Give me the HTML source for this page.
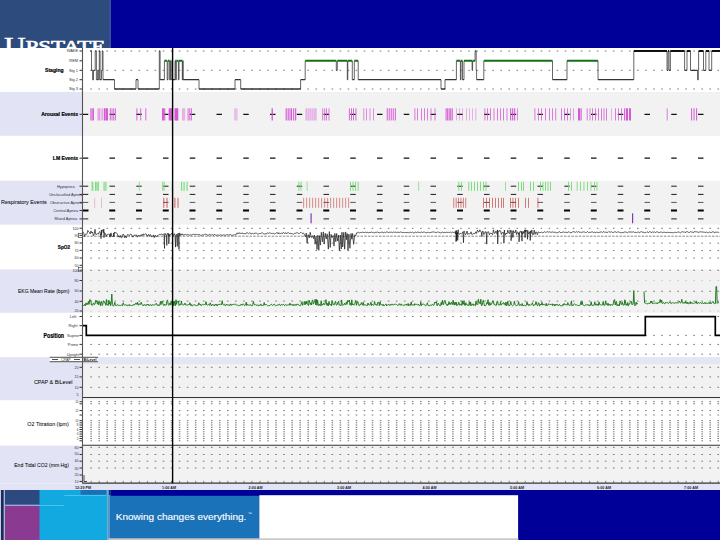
<!DOCTYPE html>
<html><head><meta charset="utf-8"><style>html,body{margin:0;padding:0;width:720px;height:540px;overflow:hidden;background:#fff}</style></head>
<body><div style="position:relative;width:720px;height:540px;overflow:hidden"><svg width="720" height="540" viewBox="0 0 720 540" style="position:absolute;left:0;top:0;display:block"><rect x="0.00" y="48.00" width="720.00" height="442.00" fill="#ffffff"/>
<rect x="0.00" y="91.90" width="82.50" height="43.90" fill="#e2e4f6"/>
<rect x="82.50" y="91.90" width="637.50" height="43.90" fill="#f2f2f2"/>
<rect x="0.00" y="180.70" width="82.50" height="44.00" fill="#e2e4f6"/>
<rect x="82.50" y="180.70" width="637.50" height="44.00" fill="#f2f2f2"/>
<rect x="0.00" y="269.40" width="82.50" height="43.40" fill="#e2e4f6"/>
<rect x="82.50" y="269.40" width="637.50" height="43.40" fill="#f2f2f2"/>
<rect x="0.00" y="357.10" width="82.50" height="43.10" fill="#e2e4f6"/>
<rect x="82.50" y="357.10" width="637.50" height="43.10" fill="#f2f2f2"/>
<rect x="0.00" y="445.60" width="82.50" height="37.80" fill="#e2e4f6"/>
<rect x="82.50" y="445.60" width="637.50" height="37.80" fill="#f2f2f2"/>
<rect x="0.00" y="483.40" width="720.00" height="6.60" fill="#e2e4f6"/>
<rect x="82.50" y="357.10" width="637.50" height="7.00" fill="#e4e6f6"/>
<path d="M90.34 51.00h1.6M98.38 51.00h1.6M106.42 51.00h1.6M114.46 51.00h1.6M122.50 51.00h1.6M130.54 51.00h1.6M138.58 51.00h1.6M146.62 51.00h1.6M154.66 51.00h1.6M162.70 51.00h1.6M170.74 51.00h1.6M178.78 51.00h1.6M186.82 51.00h1.6M194.86 51.00h1.6M202.90 51.00h1.6M210.94 51.00h1.6M218.98 51.00h1.6M227.02 51.00h1.6M235.06 51.00h1.6M243.10 51.00h1.6M251.14 51.00h1.6M259.18 51.00h1.6M267.22 51.00h1.6M275.26 51.00h1.6M283.30 51.00h1.6M291.34 51.00h1.6M299.38 51.00h1.6M307.42 51.00h1.6M315.46 51.00h1.6M323.50 51.00h1.6M331.54 51.00h1.6M339.58 51.00h1.6M347.62 51.00h1.6M355.66 51.00h1.6M363.70 51.00h1.6M371.74 51.00h1.6M379.78 51.00h1.6M387.82 51.00h1.6M395.86 51.00h1.6M403.90 51.00h1.6M411.94 51.00h1.6M419.98 51.00h1.6M428.02 51.00h1.6M436.06 51.00h1.6M444.10 51.00h1.6M452.14 51.00h1.6M460.18 51.00h1.6M468.22 51.00h1.6M476.26 51.00h1.6M484.30 51.00h1.6M492.34 51.00h1.6M500.38 51.00h1.6M508.42 51.00h1.6M516.46 51.00h1.6M524.50 51.00h1.6M532.54 51.00h1.6M540.58 51.00h1.6M548.62 51.00h1.6M556.66 51.00h1.6M564.70 51.00h1.6M572.74 51.00h1.6M580.78 51.00h1.6M588.82 51.00h1.6M596.86 51.00h1.6M604.90 51.00h1.6M612.94 51.00h1.6M620.98 51.00h1.6M629.02 51.00h1.6M637.06 51.00h1.6M645.10 51.00h1.6M653.14 51.00h1.6M661.18 51.00h1.6M669.22 51.00h1.6M677.26 51.00h1.6M685.30 51.00h1.6M693.34 51.00h1.6M701.38 51.00h1.6M709.42 51.00h1.6M717.46 51.00h1.6" stroke="#777" stroke-width="1.0" fill="none"/>
<path d="M90.34 70.30h1.6M98.38 70.30h1.6M106.42 70.30h1.6M114.46 70.30h1.6M122.50 70.30h1.6M130.54 70.30h1.6M138.58 70.30h1.6M146.62 70.30h1.6M154.66 70.30h1.6M162.70 70.30h1.6M170.74 70.30h1.6M178.78 70.30h1.6M186.82 70.30h1.6M194.86 70.30h1.6M202.90 70.30h1.6M210.94 70.30h1.6M218.98 70.30h1.6M227.02 70.30h1.6M235.06 70.30h1.6M243.10 70.30h1.6M251.14 70.30h1.6M259.18 70.30h1.6M267.22 70.30h1.6M275.26 70.30h1.6M283.30 70.30h1.6M291.34 70.30h1.6M299.38 70.30h1.6M307.42 70.30h1.6M315.46 70.30h1.6M323.50 70.30h1.6M331.54 70.30h1.6M339.58 70.30h1.6M347.62 70.30h1.6M355.66 70.30h1.6M363.70 70.30h1.6M371.74 70.30h1.6M379.78 70.30h1.6M387.82 70.30h1.6M395.86 70.30h1.6M403.90 70.30h1.6M411.94 70.30h1.6M419.98 70.30h1.6M428.02 70.30h1.6M436.06 70.30h1.6M444.10 70.30h1.6M452.14 70.30h1.6M460.18 70.30h1.6M468.22 70.30h1.6M476.26 70.30h1.6M484.30 70.30h1.6M492.34 70.30h1.6M500.38 70.30h1.6M508.42 70.30h1.6M516.46 70.30h1.6M524.50 70.30h1.6M532.54 70.30h1.6M540.58 70.30h1.6M548.62 70.30h1.6M556.66 70.30h1.6M564.70 70.30h1.6M572.74 70.30h1.6M580.78 70.30h1.6M588.82 70.30h1.6M596.86 70.30h1.6M604.90 70.30h1.6M612.94 70.30h1.6M620.98 70.30h1.6M629.02 70.30h1.6M637.06 70.30h1.6M645.10 70.30h1.6M653.14 70.30h1.6M661.18 70.30h1.6M669.22 70.30h1.6M677.26 70.30h1.6M685.30 70.30h1.6M693.34 70.30h1.6M701.38 70.30h1.6M709.42 70.30h1.6M717.46 70.30h1.6" stroke="#777" stroke-width="1.0" fill="none"/>
<path d="M90.34 89.00h1.6M98.38 89.00h1.6M106.42 89.00h1.6M114.46 89.00h1.6M122.50 89.00h1.6M130.54 89.00h1.6M138.58 89.00h1.6M146.62 89.00h1.6M154.66 89.00h1.6M162.70 89.00h1.6M170.74 89.00h1.6M178.78 89.00h1.6M186.82 89.00h1.6M194.86 89.00h1.6M202.90 89.00h1.6M210.94 89.00h1.6M218.98 89.00h1.6M227.02 89.00h1.6M235.06 89.00h1.6M243.10 89.00h1.6M251.14 89.00h1.6M259.18 89.00h1.6M267.22 89.00h1.6M275.26 89.00h1.6M283.30 89.00h1.6M291.34 89.00h1.6M299.38 89.00h1.6M307.42 89.00h1.6M315.46 89.00h1.6M323.50 89.00h1.6M331.54 89.00h1.6M339.58 89.00h1.6M347.62 89.00h1.6M355.66 89.00h1.6M363.70 89.00h1.6M371.74 89.00h1.6M379.78 89.00h1.6M387.82 89.00h1.6M395.86 89.00h1.6M403.90 89.00h1.6M411.94 89.00h1.6M419.98 89.00h1.6M428.02 89.00h1.6M436.06 89.00h1.6M444.10 89.00h1.6M452.14 89.00h1.6M460.18 89.00h1.6M468.22 89.00h1.6M476.26 89.00h1.6M484.30 89.00h1.6M492.34 89.00h1.6M500.38 89.00h1.6M508.42 89.00h1.6M516.46 89.00h1.6M524.50 89.00h1.6M532.54 89.00h1.6M540.58 89.00h1.6M548.62 89.00h1.6M556.66 89.00h1.6M564.70 89.00h1.6M572.74 89.00h1.6M580.78 89.00h1.6M588.82 89.00h1.6M596.86 89.00h1.6M604.90 89.00h1.6M612.94 89.00h1.6M620.98 89.00h1.6M629.02 89.00h1.6M637.06 89.00h1.6M645.10 89.00h1.6M653.14 89.00h1.6M661.18 89.00h1.6M669.22 89.00h1.6M677.26 89.00h1.6M685.30 89.00h1.6M693.34 89.00h1.6M701.38 89.00h1.6M709.42 89.00h1.6M717.46 89.00h1.6" stroke="#777" stroke-width="1.0" fill="none"/>
<line x1="79.50" y1="51.00" x2="82.50" y2="51.00" stroke="#333" stroke-width="1"/>
<line x1="79.50" y1="60.80" x2="82.50" y2="60.80" stroke="#333" stroke-width="1"/>
<line x1="79.50" y1="70.30" x2="82.50" y2="70.30" stroke="#333" stroke-width="1"/>
<line x1="79.50" y1="79.70" x2="82.50" y2="79.70" stroke="#333" stroke-width="1"/>
<line x1="79.50" y1="89.00" x2="82.50" y2="89.00" stroke="#333" stroke-width="1"/>
<path d="M91.50 51.00V70.30M92.60 70.30V79.70M93.50 79.70V70.30M95.20 70.30V51.00M96.40 51.00V79.70M97.70 79.70V70.30M98.30 70.30V79.70M99.30 79.70V51.00M100.10 51.00V79.70M101.50 79.70V70.30M102.30 70.30V51.00M103.00 51.00V79.70M114.50 79.70V89.00M136.00 89.00V79.70M138.00 79.70V89.00M159.30 89.00V51.00M160.10 51.00V79.70M164.40 79.70V60.80M167.20 60.80V79.70M168.00 79.70V60.80M169.60 60.80V79.70M170.50 79.70V60.80M171.30 60.80V79.70M175.00 79.70V60.80M175.70 60.80V79.70M176.30 79.70V60.80M178.40 60.80V79.70M179.00 79.70V60.80M182.30 60.80V79.70M182.80 79.70V60.80M183.10 60.80V79.70M199.00 79.70V89.00M235.00 89.00V79.70M240.70 79.70V89.00M300.60 89.00V79.70M305.20 79.70V60.80M336.30 60.80V70.30M337.30 70.30V60.80M347.30 60.80V79.70M347.80 79.70V60.80M352.30 60.80V79.70M354.30 79.70V60.80M358.20 60.80V79.70M441.00 79.70V89.00M445.00 89.00V79.70M456.40 79.70V60.80M460.40 60.80V79.70M461.00 79.70V60.80M462.50 60.80V79.70M464.00 79.70V60.80M472.10 60.80V70.30M472.60 70.30V60.80M475.10 60.80V51.00M476.20 51.00V70.30M476.60 70.30V79.70M483.80 79.70V60.80M552.50 60.80V79.70M567.00 79.70V60.80M598.00 60.80V79.70M633.80 79.70V51.00M667.00 51.00V70.30M668.00 70.30V51.00M669.00 51.00V70.30M670.40 70.30V51.00M684.60 51.00V70.30M687.00 70.30V51.00M690.50 51.00V70.30M697.60 70.30V79.70M698.30 79.70V70.30M698.60 70.30V51.00M703.50 51.00V70.30M705.80 70.30V51.00M709.00 51.00V70.30M711.70 70.30V51.00" fill="none" stroke="#333" stroke-width="0.75"/>
<path d="M90.30 51.00H91.50M91.50 70.30H92.60M92.60 79.70H93.50M93.50 70.30H95.20M95.20 51.00H96.40M96.40 79.70H97.70M97.70 70.30H98.30M98.30 79.70H99.30M99.30 51.00H100.10M100.10 79.70H101.50M101.50 70.30H102.30M102.30 51.00H103.00M103.00 79.70H114.50M114.50 89.00H136.00M136.00 79.70H138.00M138.00 89.00H159.30M159.30 51.00H160.10M160.10 79.70H164.40M167.20 79.70H168.00M169.60 79.70H170.50M171.30 79.70H175.00M175.70 79.70H176.30M178.40 79.70H179.00M182.30 79.70H182.80M183.10 79.70H199.00M199.00 89.00H235.00M235.00 79.70H240.70M240.70 89.00H300.60M300.60 79.70H305.20M336.30 70.30H337.30M347.30 79.70H347.80M352.30 79.70H354.30M358.20 79.70H441.00M441.00 89.00H445.00M445.00 79.70H456.40M460.40 79.70H461.00M462.50 79.70H464.00M472.10 70.30H472.60M475.10 51.00H476.20M476.20 70.30H476.60M476.60 79.70H483.80M552.50 79.70H567.00M598.00 79.70H633.80M667.00 70.30H668.00M669.00 70.30H670.40M684.60 70.30H687.00M690.50 70.30H697.60M697.60 79.70H698.30M698.30 70.30H698.60M703.50 70.30H705.80M709.00 70.30H711.70" fill="none" stroke="#333" stroke-width="1.3"/>
<path d="M164.40 60.80H167.20M168.00 60.80H169.60M170.50 60.80H171.30M175.00 60.80H175.70M176.30 60.80H178.40M179.00 60.80H180.50M180.50 60.80H182.30M182.80 60.80H183.10M305.20 60.80H336.30M337.30 60.80H347.30M347.80 60.80H352.30M354.30 60.80H358.20M456.40 60.80H460.40M461.00 60.80H462.50M464.00 60.80H472.10M472.60 60.80H475.10M483.80 60.80H552.50M567.00 60.80H598.00" fill="none" stroke="#157015" stroke-width="2.0"/>
<path d="M633.80 51.00H667.00M668.00 51.00H669.00M670.40 51.00H684.60M687.00 51.00H690.50M698.60 51.00H703.50M705.80 51.00H709.00M711.70 51.00H720.00" fill="none" stroke="#111" stroke-width="2.0"/>
<line x1="79.50" y1="114.30" x2="82.50" y2="114.30" stroke="#333" stroke-width="1"/>
<path d="M82.75 114.30h5.5M109.50 114.30h5.5M136.25 114.30h5.5M163.00 114.30h5.5M189.75 114.30h5.5M216.50 114.30h5.5M243.25 114.30h5.5M270.00 114.30h5.5M296.75 114.30h5.5M323.50 114.30h5.5M350.25 114.30h5.5M377.00 114.30h5.5M403.75 114.30h5.5M430.50 114.30h5.5M457.25 114.30h5.5M484.00 114.30h5.5M510.75 114.30h5.5M537.50 114.30h5.5M564.25 114.30h5.5M591.00 114.30h5.5M617.75 114.30h5.5M644.50 114.30h5.5M671.25 114.30h5.5M698.00 114.30h5.5" stroke="#111" stroke-width="1.3" fill="none"/>
<rect x="90.40" y="108.30" width="1.00" height="12.20" fill="#d456d4" opacity="0.99"/>
<rect x="91.67" y="108.30" width="1.00" height="12.20" fill="#d456d4" opacity="0.99"/>
<rect x="92.93" y="108.30" width="1.00" height="12.20" fill="#d456d4" opacity="0.99"/>
<rect x="97.60" y="108.30" width="1.00" height="12.20" fill="#d456d4" opacity="0.77"/>
<rect x="99.30" y="108.30" width="1.00" height="12.20" fill="#d456d4" opacity="0.77"/>
<rect x="101.60" y="108.30" width="1.00" height="12.20" fill="#d456d4" opacity="0.77"/>
<rect x="103.80" y="108.30" width="1.88" height="12.20" fill="#d456d4" opacity="0.99"/>
<rect x="106.00" y="108.30" width="2.00" height="12.20" fill="#d456d4" opacity="0.99"/>
<rect x="109.80" y="108.30" width="1.00" height="12.20" fill="#d456d4" opacity="0.88"/>
<rect x="111.50" y="108.30" width="1.00" height="12.20" fill="#d456d4" opacity="0.88"/>
<rect x="113.20" y="108.30" width="1.00" height="12.20" fill="#d456d4" opacity="0.88"/>
<rect x="114.90" y="108.30" width="1.00" height="12.20" fill="#d456d4" opacity="0.88"/>
<rect x="136.40" y="108.30" width="1.00" height="12.20" fill="#d456d4" opacity="0.88"/>
<rect x="140.20" y="108.30" width="1.00" height="12.20" fill="#d456d4" opacity="0.88"/>
<rect x="145.30" y="108.30" width="1.00" height="12.20" fill="#d456d4" opacity="0.88"/>
<rect x="162.00" y="108.30" width="1.00" height="12.20" fill="#d456d4" opacity="0.99"/>
<rect x="163.10" y="108.30" width="1.00" height="12.20" fill="#d456d4" opacity="0.99"/>
<rect x="164.20" y="108.30" width="1.00" height="12.20" fill="#d456d4" opacity="0.99"/>
<rect x="168.70" y="108.30" width="2.75" height="12.20" fill="#d456d4" opacity="0.99"/>
<rect x="171.00" y="108.30" width="1.25" height="12.20" fill="#d456d4" opacity="0.99"/>
<rect x="174.50" y="108.30" width="3.12" height="12.20" fill="#d456d4" opacity="0.99"/>
<rect x="176.80" y="108.30" width="1.50" height="12.20" fill="#d456d4" opacity="0.99"/>
<rect x="182.00" y="108.30" width="1.00" height="12.20" fill="#d456d4" opacity="0.44"/>
<rect x="183.10" y="108.30" width="1.00" height="12.20" fill="#d456d4" opacity="0.44"/>
<rect x="184.20" y="108.30" width="1.00" height="12.20" fill="#d456d4" opacity="0.44"/>
<rect x="187.60" y="108.30" width="1.00" height="12.20" fill="#d456d4" opacity="0.88"/>
<rect x="189.30" y="108.30" width="1.00" height="12.20" fill="#d456d4" opacity="0.88"/>
<rect x="190.90" y="108.30" width="1.00" height="12.20" fill="#d456d4" opacity="0.88"/>
<rect x="234.20" y="108.30" width="1.00" height="12.20" fill="#d456d4" opacity="0.39"/>
<rect x="235.33" y="108.30" width="1.00" height="12.20" fill="#d456d4" opacity="0.39"/>
<rect x="236.47" y="108.30" width="1.00" height="12.20" fill="#d456d4" opacity="0.39"/>
<rect x="271.50" y="108.30" width="1.50" height="12.20" fill="#d456d4" opacity="0.88"/>
<rect x="285.60" y="108.30" width="1.25" height="12.20" fill="#d456d4" opacity="0.88"/>
<rect x="287.60" y="108.30" width="1.25" height="12.20" fill="#d456d4" opacity="0.88"/>
<rect x="289.50" y="108.30" width="1.00" height="12.20" fill="#d456d4" opacity="1.00"/>
<rect x="291.00" y="108.30" width="1.00" height="12.20" fill="#d456d4" opacity="1.00"/>
<rect x="293.00" y="108.30" width="1.25" height="12.20" fill="#d456d4" opacity="0.88"/>
<rect x="295.00" y="108.30" width="1.25" height="12.20" fill="#d456d4" opacity="0.88"/>
<rect x="305.60" y="108.30" width="1.00" height="12.20" fill="#d456d4" opacity="0.66"/>
<rect x="307.60" y="108.30" width="1.00" height="12.20" fill="#d456d4" opacity="0.66"/>
<rect x="309.60" y="108.30" width="1.00" height="12.20" fill="#d456d4" opacity="0.66"/>
<rect x="311.60" y="108.30" width="1.00" height="12.20" fill="#d456d4" opacity="0.66"/>
<rect x="313.60" y="108.30" width="1.00" height="12.20" fill="#d456d4" opacity="0.66"/>
<rect x="315.40" y="108.30" width="1.00" height="12.20" fill="#d456d4" opacity="0.66"/>
<rect x="322.20" y="108.30" width="1.00" height="12.20" fill="#d456d4" opacity="0.77"/>
<rect x="324.20" y="108.30" width="1.00" height="12.20" fill="#d456d4" opacity="0.77"/>
<rect x="326.00" y="108.30" width="1.00" height="12.20" fill="#d456d4" opacity="0.77"/>
<rect x="328.50" y="108.30" width="1.00" height="12.20" fill="#d456d4" opacity="0.77"/>
<rect x="348.90" y="108.30" width="1.00" height="12.20" fill="#d456d4" opacity="0.88"/>
<rect x="351.00" y="108.30" width="1.00" height="12.20" fill="#d456d4" opacity="0.88"/>
<rect x="353.00" y="108.30" width="1.00" height="12.20" fill="#d456d4" opacity="0.88"/>
<rect x="355.40" y="108.30" width="1.00" height="12.20" fill="#d456d4" opacity="0.88"/>
<rect x="363.30" y="108.30" width="1.00" height="12.20" fill="#d456d4" opacity="0.66"/>
<rect x="366.00" y="108.30" width="1.00" height="12.20" fill="#d456d4" opacity="0.66"/>
<rect x="369.50" y="108.30" width="1.00" height="12.20" fill="#d456d4" opacity="0.66"/>
<rect x="373.00" y="108.30" width="1.00" height="12.20" fill="#d456d4" opacity="0.66"/>
<rect x="386.70" y="108.30" width="1.12" height="12.20" fill="#d456d4" opacity="0.88"/>
<rect x="388.70" y="108.30" width="1.12" height="12.20" fill="#d456d4" opacity="0.88"/>
<rect x="390.70" y="108.30" width="1.12" height="12.20" fill="#d456d4" opacity="0.88"/>
<rect x="392.70" y="108.30" width="1.12" height="12.20" fill="#d456d4" opacity="0.88"/>
<rect x="394.80" y="108.30" width="1.12" height="12.20" fill="#d456d4" opacity="0.88"/>
<rect x="414.40" y="108.30" width="1.00" height="12.20" fill="#d456d4" opacity="0.77"/>
<rect x="417.00" y="108.30" width="1.00" height="12.20" fill="#d456d4" opacity="0.77"/>
<rect x="421.00" y="108.30" width="1.00" height="12.20" fill="#d456d4" opacity="0.77"/>
<rect x="424.00" y="108.30" width="1.00" height="12.20" fill="#d456d4" opacity="0.77"/>
<rect x="427.00" y="108.30" width="1.00" height="12.20" fill="#d456d4" opacity="0.77"/>
<rect x="430.50" y="108.30" width="1.00" height="12.20" fill="#d456d4" opacity="0.77"/>
<rect x="434.50" y="108.30" width="1.00" height="12.20" fill="#d456d4" opacity="0.77"/>
<rect x="445.60" y="108.30" width="1.00" height="12.20" fill="#d456d4" opacity="0.99"/>
<rect x="447.14" y="108.30" width="1.00" height="12.20" fill="#d456d4" opacity="0.99"/>
<rect x="448.68" y="108.30" width="1.00" height="12.20" fill="#d456d4" opacity="0.99"/>
<rect x="450.22" y="108.30" width="1.00" height="12.20" fill="#d456d4" opacity="0.99"/>
<rect x="451.76" y="108.30" width="1.00" height="12.20" fill="#d456d4" opacity="0.99"/>
<rect x="456.00" y="108.30" width="1.00" height="12.20" fill="#d456d4" opacity="0.44"/>
<rect x="459.00" y="108.30" width="1.00" height="12.20" fill="#d456d4" opacity="0.44"/>
<rect x="462.00" y="108.30" width="1.00" height="12.20" fill="#d456d4" opacity="0.44"/>
<rect x="466.00" y="108.30" width="1.00" height="12.20" fill="#d456d4" opacity="0.44"/>
<rect x="469.00" y="108.30" width="1.00" height="12.20" fill="#d456d4" opacity="0.44"/>
<rect x="472.00" y="108.30" width="1.00" height="12.20" fill="#d456d4" opacity="0.44"/>
<rect x="475.30" y="108.30" width="1.00" height="12.20" fill="#d456d4" opacity="0.44"/>
<rect x="484.40" y="108.30" width="1.00" height="12.20" fill="#d456d4" opacity="0.77"/>
<rect x="487.00" y="108.30" width="1.00" height="12.20" fill="#d456d4" opacity="0.77"/>
<rect x="490.00" y="108.30" width="1.00" height="12.20" fill="#d456d4" opacity="0.77"/>
<rect x="493.50" y="108.30" width="1.00" height="12.20" fill="#d456d4" opacity="0.77"/>
<rect x="497.00" y="108.30" width="1.00" height="12.20" fill="#d456d4" opacity="0.77"/>
<rect x="500.00" y="108.30" width="1.00" height="12.20" fill="#d456d4" opacity="0.77"/>
<rect x="503.00" y="108.30" width="1.00" height="12.20" fill="#d456d4" opacity="0.77"/>
<rect x="506.50" y="108.30" width="1.00" height="12.20" fill="#d456d4" opacity="0.77"/>
<rect x="510.00" y="108.30" width="1.25" height="12.20" fill="#d456d4" opacity="0.88"/>
<rect x="512.00" y="108.30" width="1.25" height="12.20" fill="#d456d4" opacity="0.88"/>
<rect x="514.00" y="108.30" width="1.25" height="12.20" fill="#d456d4" opacity="0.88"/>
<rect x="517.00" y="108.30" width="1.00" height="12.20" fill="#d456d4" opacity="0.66"/>
<rect x="534.40" y="108.30" width="1.00" height="12.20" fill="#d456d4" opacity="0.77"/>
<rect x="538.00" y="108.30" width="1.00" height="12.20" fill="#d456d4" opacity="0.77"/>
<rect x="541.00" y="108.30" width="1.00" height="12.20" fill="#d456d4" opacity="0.77"/>
<rect x="545.00" y="108.30" width="1.00" height="12.20" fill="#d456d4" opacity="0.77"/>
<rect x="549.00" y="108.30" width="1.00" height="12.20" fill="#d456d4" opacity="0.77"/>
<rect x="552.00" y="108.30" width="1.00" height="12.20" fill="#d456d4" opacity="0.77"/>
<rect x="555.20" y="108.30" width="1.00" height="12.20" fill="#d456d4" opacity="0.77"/>
<rect x="561.00" y="108.30" width="1.00" height="12.20" fill="#d456d4" opacity="0.77"/>
<rect x="564.00" y="108.30" width="1.00" height="12.20" fill="#d456d4" opacity="0.77"/>
<rect x="567.00" y="108.30" width="1.00" height="12.20" fill="#d456d4" opacity="0.77"/>
<rect x="570.00" y="108.30" width="1.00" height="12.20" fill="#d456d4" opacity="0.55"/>
<rect x="573.00" y="108.30" width="1.00" height="12.20" fill="#d456d4" opacity="0.55"/>
<rect x="578.00" y="108.30" width="2.50" height="12.20" fill="#d456d4" opacity="0.99"/>
<rect x="581.00" y="108.30" width="1.00" height="12.20" fill="#d456d4" opacity="0.66"/>
<rect x="586.70" y="108.30" width="1.00" height="12.20" fill="#d456d4" opacity="0.77"/>
<rect x="589.50" y="108.30" width="1.00" height="12.20" fill="#d456d4" opacity="0.77"/>
<rect x="592.00" y="108.30" width="1.00" height="12.20" fill="#d456d4" opacity="0.77"/>
<rect x="595.00" y="108.30" width="1.00" height="12.20" fill="#d456d4" opacity="0.77"/>
<rect x="598.00" y="108.30" width="1.00" height="12.20" fill="#d456d4" opacity="0.77"/>
<rect x="601.00" y="108.30" width="1.00" height="12.20" fill="#d456d4" opacity="0.77"/>
<rect x="603.50" y="108.30" width="1.00" height="12.20" fill="#d456d4" opacity="0.77"/>
<rect x="606.00" y="108.30" width="1.00" height="12.20" fill="#d456d4" opacity="0.77"/>
<rect x="611.00" y="108.30" width="1.00" height="12.20" fill="#d456d4" opacity="0.44"/>
<rect x="615.00" y="108.30" width="1.00" height="12.20" fill="#d456d4" opacity="0.77"/>
<rect x="618.00" y="108.30" width="1.00" height="12.20" fill="#d456d4" opacity="0.77"/>
<rect x="621.00" y="108.30" width="1.00" height="12.20" fill="#d456d4" opacity="0.77"/>
<rect x="624.00" y="108.30" width="1.25" height="12.20" fill="#d456d4" opacity="0.88"/>
<rect x="626.00" y="108.30" width="2.00" height="12.20" fill="#d456d4" opacity="0.99"/>
<rect x="629.00" y="108.30" width="2.00" height="12.20" fill="#d456d4" opacity="0.99"/>
<rect x="666.70" y="108.30" width="1.00" height="12.20" fill="#d456d4" opacity="0.77"/>
<rect x="691.00" y="108.30" width="1.12" height="12.20" fill="#d456d4" opacity="0.88"/>
<rect x="693.50" y="108.30" width="1.12" height="12.20" fill="#d456d4" opacity="0.88"/>
<rect x="696.00" y="108.30" width="1.12" height="12.20" fill="#d456d4" opacity="0.88"/>
<line x1="79.50" y1="158.20" x2="82.50" y2="158.20" stroke="#333" stroke-width="1"/>
<path d="M82.75 158.20h5.5M109.50 158.20h5.5M136.25 158.20h5.5M163.00 158.20h5.5M189.75 158.20h5.5M216.50 158.20h5.5M243.25 158.20h5.5M270.00 158.20h5.5M296.75 158.20h5.5M323.50 158.20h5.5M350.25 158.20h5.5M377.00 158.20h5.5M403.75 158.20h5.5M430.50 158.20h5.5M457.25 158.20h5.5M484.00 158.20h5.5M510.75 158.20h5.5M537.50 158.20h5.5M564.25 158.20h5.5M591.00 158.20h5.5M617.75 158.20h5.5M644.50 158.20h5.5M671.25 158.20h5.5M698.00 158.20h5.5" stroke="#111" stroke-width="1.3" fill="none"/>
<line x1="79.50" y1="186.20" x2="82.50" y2="186.20" stroke="#333" stroke-width="1"/>
<line x1="79.50" y1="194.40" x2="82.50" y2="194.40" stroke="#333" stroke-width="1"/>
<line x1="79.50" y1="202.40" x2="82.50" y2="202.40" stroke="#333" stroke-width="1"/>
<line x1="79.50" y1="210.50" x2="82.50" y2="210.50" stroke="#333" stroke-width="1"/>
<line x1="79.50" y1="218.90" x2="82.50" y2="218.90" stroke="#333" stroke-width="1"/>
<path d="M82.75 186.20h5.5M109.50 186.20h5.5M136.25 186.20h5.5M163.00 186.20h5.5M189.75 186.20h5.5M216.50 186.20h5.5M243.25 186.20h5.5M270.00 186.20h5.5M296.75 186.20h5.5M323.50 186.20h5.5M350.25 186.20h5.5M377.00 186.20h5.5M403.75 186.20h5.5M430.50 186.20h5.5M457.25 186.20h5.5M484.00 186.20h5.5M510.75 186.20h5.5M537.50 186.20h5.5M564.25 186.20h5.5M591.00 186.20h5.5M617.75 186.20h5.5M644.50 186.20h5.5M671.25 186.20h5.5M698.00 186.20h5.5" stroke="#1a1a1a" stroke-width="1.0" fill="none"/>
<path d="M82.75 194.40h5.5M109.50 194.40h5.5M136.25 194.40h5.5M163.00 194.40h5.5M189.75 194.40h5.5M216.50 194.40h5.5M243.25 194.40h5.5M270.00 194.40h5.5M296.75 194.40h5.5M323.50 194.40h5.5M350.25 194.40h5.5M377.00 194.40h5.5M403.75 194.40h5.5M430.50 194.40h5.5M457.25 194.40h5.5M484.00 194.40h5.5M510.75 194.40h5.5M537.50 194.40h5.5M564.25 194.40h5.5M591.00 194.40h5.5M617.75 194.40h5.5M644.50 194.40h5.5M671.25 194.40h5.5M698.00 194.40h5.5" stroke="#1a1a1a" stroke-width="1.0" fill="none"/>
<path d="M82.75 202.40h5.5M109.50 202.40h5.5M136.25 202.40h5.5M163.00 202.40h5.5M189.75 202.40h5.5M216.50 202.40h5.5M243.25 202.40h5.5M270.00 202.40h5.5M296.75 202.40h5.5M323.50 202.40h5.5M350.25 202.40h5.5M377.00 202.40h5.5M403.75 202.40h5.5M430.50 202.40h5.5M457.25 202.40h5.5M484.00 202.40h5.5M510.75 202.40h5.5M537.50 202.40h5.5M564.25 202.40h5.5M591.00 202.40h5.5M617.75 202.40h5.5M644.50 202.40h5.5M671.25 202.40h5.5M698.00 202.40h5.5" stroke="#555" stroke-width="1.0" fill="none"/>
<path d="M82.50 210.50h6M109.25 210.50h6M136.00 210.50h6M162.75 210.50h6M189.50 210.50h6M216.25 210.50h6M243.00 210.50h6M269.75 210.50h6M296.50 210.50h6M323.25 210.50h6M350.00 210.50h6M376.75 210.50h6M403.50 210.50h6M430.25 210.50h6M457.00 210.50h6M483.75 210.50h6M510.50 210.50h6M537.25 210.50h6M564.00 210.50h6M590.75 210.50h6M617.50 210.50h6M644.25 210.50h6M671.00 210.50h6M697.75 210.50h6" stroke="#000" stroke-width="1.8" fill="none"/>
<path d="M82.75 218.90h5.5M109.50 218.90h5.5M136.25 218.90h5.5M163.00 218.90h5.5M189.75 218.90h5.5M216.50 218.90h5.5M243.25 218.90h5.5M270.00 218.90h5.5M296.75 218.90h5.5M323.50 218.90h5.5M350.25 218.90h5.5M377.00 218.90h5.5M403.75 218.90h5.5M430.50 218.90h5.5M457.25 218.90h5.5M484.00 218.90h5.5M510.75 218.90h5.5M537.50 218.90h5.5M564.25 218.90h5.5M591.00 218.90h5.5M617.75 218.90h5.5M644.50 218.90h5.5M671.25 218.90h5.5M698.00 218.90h5.5" stroke="#1a1a1a" stroke-width="1.0" fill="none"/>
<rect x="91.60" y="181.80" width="1.70" height="9.00" fill="#6fdc6f" opacity="0.9"/>
<rect x="95.00" y="181.80" width="1.70" height="9.00" fill="#6fdc6f" opacity="0.9"/>
<rect x="97.30" y="181.80" width="1.60" height="9.00" fill="#6fdc6f" opacity="0.9"/>
<rect x="103.50" y="181.80" width="1.20" height="9.00" fill="#6fdc6f" opacity="0.9"/>
<rect x="105.30" y="181.80" width="1.20" height="9.00" fill="#6fdc6f" opacity="0.9"/>
<rect x="138.90" y="181.80" width="0.80" height="9.00" fill="#6fdc6f" opacity="0.9"/>
<rect x="162.20" y="181.80" width="1.20" height="9.00" fill="#6fdc6f" opacity="0.9"/>
<rect x="163.80" y="181.80" width="0.80" height="9.00" fill="#6fdc6f" opacity="0.9"/>
<rect x="171.80" y="181.80" width="1.00" height="9.00" fill="#6fdc6f" opacity="0.9"/>
<rect x="181.00" y="181.80" width="1.20" height="9.00" fill="#6fdc6f" opacity="0.9"/>
<rect x="183.50" y="181.80" width="1.20" height="9.00" fill="#6fdc6f" opacity="0.9"/>
<rect x="186.50" y="181.80" width="1.20" height="9.00" fill="#6fdc6f" opacity="0.9"/>
<rect x="298.30" y="181.80" width="1.00" height="9.00" fill="#6fdc6f" opacity="0.9"/>
<rect x="300.50" y="181.80" width="1.00" height="9.00" fill="#6fdc6f" opacity="0.9"/>
<rect x="306.70" y="181.80" width="0.80" height="9.00" fill="#6fdc6f" opacity="0.9"/>
<rect x="350.00" y="181.80" width="1.00" height="9.00" fill="#6fdc6f" opacity="0.9"/>
<rect x="352.50" y="181.80" width="1.00" height="9.00" fill="#6fdc6f" opacity="0.9"/>
<rect x="355.00" y="181.80" width="1.00" height="9.00" fill="#6fdc6f" opacity="0.9"/>
<rect x="357.60" y="181.80" width="1.00" height="9.00" fill="#6fdc6f" opacity="0.9"/>
<rect x="418.30" y="181.80" width="0.80" height="9.00" fill="#6fdc6f" opacity="0.9"/>
<rect x="458.30" y="181.80" width="1.00" height="9.00" fill="#6fdc6f" opacity="0.9"/>
<rect x="461.00" y="181.80" width="1.00" height="9.00" fill="#6fdc6f" opacity="0.9"/>
<rect x="468.30" y="181.80" width="1.00" height="9.00" fill="#6fdc6f" opacity="0.9"/>
<rect x="471.00" y="181.80" width="1.00" height="9.00" fill="#6fdc6f" opacity="0.9"/>
<rect x="474.00" y="181.80" width="1.00" height="9.00" fill="#6fdc6f" opacity="0.9"/>
<rect x="477.00" y="181.80" width="1.00" height="9.00" fill="#6fdc6f" opacity="0.9"/>
<rect x="480.00" y="181.80" width="1.00" height="9.00" fill="#6fdc6f" opacity="0.9"/>
<rect x="483.00" y="181.80" width="1.00" height="9.00" fill="#6fdc6f" opacity="0.9"/>
<rect x="485.50" y="181.80" width="1.00" height="9.00" fill="#6fdc6f" opacity="0.9"/>
<rect x="505.00" y="181.80" width="0.80" height="9.00" fill="#6fdc6f" opacity="0.9"/>
<rect x="518.00" y="181.80" width="1.00" height="9.00" fill="#6fdc6f" opacity="0.9"/>
<rect x="521.00" y="181.80" width="1.00" height="9.00" fill="#6fdc6f" opacity="0.9"/>
<rect x="523.00" y="181.80" width="1.00" height="9.00" fill="#6fdc6f" opacity="0.9"/>
<rect x="530.00" y="181.80" width="1.00" height="9.00" fill="#6fdc6f" opacity="0.9"/>
<rect x="533.00" y="181.80" width="1.00" height="9.00" fill="#6fdc6f" opacity="0.9"/>
<rect x="540.00" y="181.80" width="1.00" height="9.00" fill="#6fdc6f" opacity="0.9"/>
<rect x="542.50" y="181.80" width="1.00" height="9.00" fill="#6fdc6f" opacity="0.9"/>
<rect x="545.00" y="181.80" width="1.00" height="9.00" fill="#6fdc6f" opacity="0.9"/>
<rect x="547.50" y="181.80" width="1.00" height="9.00" fill="#6fdc6f" opacity="0.9"/>
<rect x="550.00" y="181.80" width="1.00" height="9.00" fill="#6fdc6f" opacity="0.9"/>
<rect x="568.00" y="181.80" width="1.00" height="9.00" fill="#6fdc6f" opacity="0.9"/>
<rect x="571.00" y="181.80" width="1.00" height="9.00" fill="#6fdc6f" opacity="0.9"/>
<rect x="576.70" y="181.80" width="0.90" height="9.00" fill="#6fdc6f" opacity="0.9"/>
<rect x="580.00" y="181.80" width="0.90" height="9.00" fill="#6fdc6f" opacity="0.9"/>
<rect x="583.50" y="181.80" width="0.90" height="9.00" fill="#6fdc6f" opacity="0.9"/>
<rect x="587.00" y="181.80" width="0.90" height="9.00" fill="#6fdc6f" opacity="0.9"/>
<rect x="590.50" y="181.80" width="0.90" height="9.00" fill="#6fdc6f" opacity="0.9"/>
<rect x="594.00" y="181.80" width="0.90" height="9.00" fill="#6fdc6f" opacity="0.9"/>
<rect x="596.50" y="181.80" width="0.90" height="9.00" fill="#6fdc6f" opacity="0.9"/>
<rect x="94.40" y="197.80" width="0.70" height="10.00" fill="#c83a3a" opacity="0.4"/>
<rect x="101.10" y="197.80" width="0.70" height="10.00" fill="#c83a3a" opacity="0.4"/>
<rect x="163.30" y="197.80" width="1.00" height="10.00" fill="#c83a3a" opacity="0.8"/>
<rect x="166.50" y="197.80" width="1.00" height="10.00" fill="#c83a3a" opacity="0.8"/>
<rect x="174.40" y="197.80" width="1.00" height="10.00" fill="#c83a3a" opacity="0.8"/>
<rect x="177.50" y="197.80" width="1.00" height="10.00" fill="#c83a3a" opacity="0.8"/>
<rect x="303.30" y="197.80" width="0.80" height="10.00" fill="#c83a3a" opacity="0.7"/>
<rect x="306.30" y="197.80" width="0.80" height="10.00" fill="#c83a3a" opacity="0.7"/>
<rect x="309.30" y="197.80" width="0.80" height="10.00" fill="#c83a3a" opacity="0.7"/>
<rect x="312.30" y="197.80" width="0.80" height="10.00" fill="#c83a3a" opacity="0.7"/>
<rect x="315.30" y="197.80" width="0.80" height="10.00" fill="#c83a3a" opacity="0.7"/>
<rect x="318.30" y="197.80" width="0.80" height="10.00" fill="#c83a3a" opacity="0.7"/>
<rect x="321.30" y="197.80" width="0.80" height="10.00" fill="#c83a3a" opacity="0.7"/>
<rect x="324.30" y="197.80" width="0.80" height="10.00" fill="#c83a3a" opacity="0.7"/>
<rect x="327.30" y="197.80" width="0.80" height="10.00" fill="#c83a3a" opacity="0.7"/>
<rect x="330.30" y="197.80" width="0.80" height="10.00" fill="#c83a3a" opacity="0.7"/>
<rect x="333.30" y="197.80" width="0.80" height="10.00" fill="#c83a3a" opacity="0.7"/>
<rect x="336.30" y="197.80" width="0.80" height="10.00" fill="#c83a3a" opacity="0.7"/>
<rect x="339.30" y="197.80" width="0.80" height="10.00" fill="#c83a3a" opacity="0.7"/>
<rect x="342.30" y="197.80" width="0.80" height="10.00" fill="#c83a3a" opacity="0.7"/>
<rect x="345.30" y="197.80" width="0.80" height="10.00" fill="#c83a3a" opacity="0.7"/>
<rect x="348.30" y="197.80" width="0.80" height="10.00" fill="#c83a3a" opacity="0.7"/>
<rect x="453.30" y="197.80" width="0.90" height="10.00" fill="#c83a3a" opacity="0.7"/>
<rect x="455.70" y="197.80" width="0.90" height="10.00" fill="#c83a3a" opacity="0.7"/>
<rect x="458.10" y="197.80" width="0.90" height="10.00" fill="#c83a3a" opacity="0.7"/>
<rect x="460.50" y="197.80" width="0.90" height="10.00" fill="#c83a3a" opacity="0.7"/>
<rect x="462.90" y="197.80" width="0.90" height="10.00" fill="#c83a3a" opacity="0.7"/>
<rect x="465.30" y="197.80" width="0.90" height="10.00" fill="#c83a3a" opacity="0.7"/>
<rect x="483.00" y="197.80" width="0.90" height="10.00" fill="#c83a3a" opacity="0.75"/>
<rect x="486.00" y="197.80" width="0.90" height="10.00" fill="#c83a3a" opacity="0.75"/>
<rect x="489.00" y="197.80" width="0.90" height="10.00" fill="#c83a3a" opacity="0.75"/>
<rect x="492.00" y="197.80" width="0.90" height="10.00" fill="#c83a3a" opacity="0.75"/>
<rect x="495.00" y="197.80" width="0.90" height="10.00" fill="#c83a3a" opacity="0.75"/>
<rect x="498.00" y="197.80" width="0.90" height="10.00" fill="#c83a3a" opacity="0.75"/>
<rect x="501.00" y="197.80" width="0.90" height="10.00" fill="#c83a3a" opacity="0.75"/>
<rect x="503.00" y="197.80" width="0.90" height="10.00" fill="#c83a3a" opacity="0.75"/>
<rect x="510.00" y="197.80" width="0.90" height="10.00" fill="#c83a3a" opacity="0.75"/>
<rect x="512.50" y="197.80" width="0.90" height="10.00" fill="#c83a3a" opacity="0.75"/>
<rect x="515.00" y="197.80" width="0.90" height="10.00" fill="#c83a3a" opacity="0.75"/>
<rect x="518.00" y="197.80" width="0.90" height="10.00" fill="#c83a3a" opacity="0.75"/>
<rect x="525.00" y="197.80" width="0.90" height="10.00" fill="#c83a3a" opacity="0.75"/>
<rect x="528.00" y="197.80" width="0.90" height="10.00" fill="#c83a3a" opacity="0.75"/>
<rect x="537.50" y="197.80" width="0.90" height="10.00" fill="#c83a3a" opacity="0.75"/>
<rect x="310.50" y="213.30" width="1.20" height="10.00" fill="#8a3ab0"/>
<rect x="632.00" y="213.30" width="1.20" height="10.00" fill="#8a3ab0"/>
<line x1="79.50" y1="228.20" x2="82.50" y2="228.20" stroke="#333" stroke-width="1"/>
<line x1="79.50" y1="235.30" x2="82.50" y2="235.30" stroke="#333" stroke-width="1"/>
<line x1="79.50" y1="243.00" x2="82.50" y2="243.00" stroke="#333" stroke-width="1"/>
<line x1="79.50" y1="250.40" x2="82.50" y2="250.40" stroke="#333" stroke-width="1"/>
<line x1="79.50" y1="258.00" x2="82.50" y2="258.00" stroke="#333" stroke-width="1"/>
<line x1="79.50" y1="265.30" x2="82.50" y2="265.30" stroke="#333" stroke-width="1"/>
<path d="M90.34 228.30h1.6M98.38 228.30h1.6M106.42 228.30h1.6M114.46 228.30h1.6M122.50 228.30h1.6M130.54 228.30h1.6M138.58 228.30h1.6M146.62 228.30h1.6M154.66 228.30h1.6M162.70 228.30h1.6M170.74 228.30h1.6M178.78 228.30h1.6M186.82 228.30h1.6M194.86 228.30h1.6M202.90 228.30h1.6M210.94 228.30h1.6M218.98 228.30h1.6M227.02 228.30h1.6M235.06 228.30h1.6M243.10 228.30h1.6M251.14 228.30h1.6M259.18 228.30h1.6M267.22 228.30h1.6M275.26 228.30h1.6M283.30 228.30h1.6M291.34 228.30h1.6M299.38 228.30h1.6M307.42 228.30h1.6M315.46 228.30h1.6M323.50 228.30h1.6M331.54 228.30h1.6M339.58 228.30h1.6M347.62 228.30h1.6M355.66 228.30h1.6M363.70 228.30h1.6M371.74 228.30h1.6M379.78 228.30h1.6M387.82 228.30h1.6M395.86 228.30h1.6M403.90 228.30h1.6M411.94 228.30h1.6M419.98 228.30h1.6M428.02 228.30h1.6M436.06 228.30h1.6M444.10 228.30h1.6M452.14 228.30h1.6M460.18 228.30h1.6M468.22 228.30h1.6M476.26 228.30h1.6M484.30 228.30h1.6M492.34 228.30h1.6M500.38 228.30h1.6M508.42 228.30h1.6M516.46 228.30h1.6M524.50 228.30h1.6M532.54 228.30h1.6M540.58 228.30h1.6M548.62 228.30h1.6M556.66 228.30h1.6M564.70 228.30h1.6M572.74 228.30h1.6M580.78 228.30h1.6M588.82 228.30h1.6M596.86 228.30h1.6M604.90 228.30h1.6M612.94 228.30h1.6M620.98 228.30h1.6M629.02 228.30h1.6M637.06 228.30h1.6M645.10 228.30h1.6M653.14 228.30h1.6M661.18 228.30h1.6M669.22 228.30h1.6M677.26 228.30h1.6M685.30 228.30h1.6M693.34 228.30h1.6M701.38 228.30h1.6M709.42 228.30h1.6M717.46 228.30h1.6" stroke="#777" stroke-width="1.0" fill="none"/>
<path d="M90.34 243.10h1.6M98.38 243.10h1.6M106.42 243.10h1.6M114.46 243.10h1.6M122.50 243.10h1.6M130.54 243.10h1.6M138.58 243.10h1.6M146.62 243.10h1.6M154.66 243.10h1.6M162.70 243.10h1.6M170.74 243.10h1.6M178.78 243.10h1.6M186.82 243.10h1.6M194.86 243.10h1.6M202.90 243.10h1.6M210.94 243.10h1.6M218.98 243.10h1.6M227.02 243.10h1.6M235.06 243.10h1.6M243.10 243.10h1.6M251.14 243.10h1.6M259.18 243.10h1.6M267.22 243.10h1.6M275.26 243.10h1.6M283.30 243.10h1.6M291.34 243.10h1.6M299.38 243.10h1.6M307.42 243.10h1.6M315.46 243.10h1.6M323.50 243.10h1.6M331.54 243.10h1.6M339.58 243.10h1.6M347.62 243.10h1.6M355.66 243.10h1.6M363.70 243.10h1.6M371.74 243.10h1.6M379.78 243.10h1.6M387.82 243.10h1.6M395.86 243.10h1.6M403.90 243.10h1.6M411.94 243.10h1.6M419.98 243.10h1.6M428.02 243.10h1.6M436.06 243.10h1.6M444.10 243.10h1.6M452.14 243.10h1.6M460.18 243.10h1.6M468.22 243.10h1.6M476.26 243.10h1.6M484.30 243.10h1.6M492.34 243.10h1.6M500.38 243.10h1.6M508.42 243.10h1.6M516.46 243.10h1.6M524.50 243.10h1.6M532.54 243.10h1.6M540.58 243.10h1.6M548.62 243.10h1.6M556.66 243.10h1.6M564.70 243.10h1.6M572.74 243.10h1.6M580.78 243.10h1.6M588.82 243.10h1.6M596.86 243.10h1.6M604.90 243.10h1.6M612.94 243.10h1.6M620.98 243.10h1.6M629.02 243.10h1.6M637.06 243.10h1.6M645.10 243.10h1.6M653.14 243.10h1.6M661.18 243.10h1.6M669.22 243.10h1.6M677.26 243.10h1.6M685.30 243.10h1.6M693.34 243.10h1.6M701.38 243.10h1.6M709.42 243.10h1.6M717.46 243.10h1.6" stroke="#777" stroke-width="1.0" fill="none"/>
<path d="M90.34 250.60h1.6M98.38 250.60h1.6M106.42 250.60h1.6M114.46 250.60h1.6M122.50 250.60h1.6M130.54 250.60h1.6M138.58 250.60h1.6M146.62 250.60h1.6M154.66 250.60h1.6M162.70 250.60h1.6M170.74 250.60h1.6M178.78 250.60h1.6M186.82 250.60h1.6M194.86 250.60h1.6M202.90 250.60h1.6M210.94 250.60h1.6M218.98 250.60h1.6M227.02 250.60h1.6M235.06 250.60h1.6M243.10 250.60h1.6M251.14 250.60h1.6M259.18 250.60h1.6M267.22 250.60h1.6M275.26 250.60h1.6M283.30 250.60h1.6M291.34 250.60h1.6M299.38 250.60h1.6M307.42 250.60h1.6M315.46 250.60h1.6M323.50 250.60h1.6M331.54 250.60h1.6M339.58 250.60h1.6M347.62 250.60h1.6M355.66 250.60h1.6M363.70 250.60h1.6M371.74 250.60h1.6M379.78 250.60h1.6M387.82 250.60h1.6M395.86 250.60h1.6M403.90 250.60h1.6M411.94 250.60h1.6M419.98 250.60h1.6M428.02 250.60h1.6M436.06 250.60h1.6M444.10 250.60h1.6M452.14 250.60h1.6M460.18 250.60h1.6M468.22 250.60h1.6M476.26 250.60h1.6M484.30 250.60h1.6M492.34 250.60h1.6M500.38 250.60h1.6M508.42 250.60h1.6M516.46 250.60h1.6M524.50 250.60h1.6M532.54 250.60h1.6M540.58 250.60h1.6M548.62 250.60h1.6M556.66 250.60h1.6M564.70 250.60h1.6M572.74 250.60h1.6M580.78 250.60h1.6M588.82 250.60h1.6M596.86 250.60h1.6M604.90 250.60h1.6M612.94 250.60h1.6M620.98 250.60h1.6M629.02 250.60h1.6M637.06 250.60h1.6M645.10 250.60h1.6M653.14 250.60h1.6M661.18 250.60h1.6M669.22 250.60h1.6M677.26 250.60h1.6M685.30 250.60h1.6M693.34 250.60h1.6M701.38 250.60h1.6M709.42 250.60h1.6M717.46 250.60h1.6" stroke="#777" stroke-width="1.0" fill="none"/>
<path d="M90.34 258.10h1.6M98.38 258.10h1.6M106.42 258.10h1.6M114.46 258.10h1.6M122.50 258.10h1.6M130.54 258.10h1.6M138.58 258.10h1.6M146.62 258.10h1.6M154.66 258.10h1.6M162.70 258.10h1.6M170.74 258.10h1.6M178.78 258.10h1.6M186.82 258.10h1.6M194.86 258.10h1.6M202.90 258.10h1.6M210.94 258.10h1.6M218.98 258.10h1.6M227.02 258.10h1.6M235.06 258.10h1.6M243.10 258.10h1.6M251.14 258.10h1.6M259.18 258.10h1.6M267.22 258.10h1.6M275.26 258.10h1.6M283.30 258.10h1.6M291.34 258.10h1.6M299.38 258.10h1.6M307.42 258.10h1.6M315.46 258.10h1.6M323.50 258.10h1.6M331.54 258.10h1.6M339.58 258.10h1.6M347.62 258.10h1.6M355.66 258.10h1.6M363.70 258.10h1.6M371.74 258.10h1.6M379.78 258.10h1.6M387.82 258.10h1.6M395.86 258.10h1.6M403.90 258.10h1.6M411.94 258.10h1.6M419.98 258.10h1.6M428.02 258.10h1.6M436.06 258.10h1.6M444.10 258.10h1.6M452.14 258.10h1.6M460.18 258.10h1.6M468.22 258.10h1.6M476.26 258.10h1.6M484.30 258.10h1.6M492.34 258.10h1.6M500.38 258.10h1.6M508.42 258.10h1.6M516.46 258.10h1.6M524.50 258.10h1.6M532.54 258.10h1.6M540.58 258.10h1.6M548.62 258.10h1.6M556.66 258.10h1.6M564.70 258.10h1.6M572.74 258.10h1.6M580.78 258.10h1.6M588.82 258.10h1.6M596.86 258.10h1.6M604.90 258.10h1.6M612.94 258.10h1.6M620.98 258.10h1.6M629.02 258.10h1.6M637.06 258.10h1.6M645.10 258.10h1.6M653.14 258.10h1.6M661.18 258.10h1.6M669.22 258.10h1.6M677.26 258.10h1.6M685.30 258.10h1.6M693.34 258.10h1.6M701.38 258.10h1.6M709.42 258.10h1.6M717.46 258.10h1.6" stroke="#777" stroke-width="1.0" fill="none"/>
<line x1="83" y1="236.2" x2="720" y2="236.2" stroke="#555" stroke-width="0.7" stroke-dasharray="2.5 1.2"/>
<path d="M83.00 231.75 L83.80 233.39 L84.60 236.56 L85.40 234.28 L86.20 234.28 L87.00 233.88 L87.80 230.42 L88.60 231.67 L89.40 232.37 L90.20 234.04 L91.00 230.89 L91.80 233.03 L92.60 232.04 L93.40 235.89 L94.20 234.23 L95.00 229.31 L95.80 234.42 L96.60 234.51 L97.40 233.47 L98.20 234.30 L99.00 232.31 L99.80 231.53 L100.50 234.70 L100.60 233.97 L101.00 238.68 L101.40 230.13 L101.50 234.79 L102.20 229.99 L103.00 229.95 L103.50 232.68 L103.80 229.08 L104.00 237.60 L104.50 232.50 L104.60 232.62 L105.40 233.51 L106.20 236.51 L107.00 234.44 L107.80 234.70 L108.60 234.00 L109.40 234.81 L109.50 235.26 L110.00 237.21 L110.20 233.79 L110.50 236.02 L111.00 232.89 L111.80 236.49 L112.60 236.48 L113.40 235.70 L113.50 233.02 L114.00 237.03 L114.20 235.04 L114.50 231.99 L115.00 233.08 L115.80 232.65 L116.60 232.95 L117.40 234.28 L118.20 237.07 L119.00 235.60 L119.80 237.39 L120.60 235.55 L121.40 237.83 L122.20 237.39 L123.00 234.00 L123.80 234.84 L124.60 237.64 L125.40 235.88 L126.20 237.92 L127.00 235.59 L127.80 234.29 L128.60 235.17 L129.40 235.74 L130.20 234.37 L131.00 234.01 L131.80 234.96 L132.60 237.07 L133.40 236.65 L134.20 234.90 L135.00 235.42 L135.80 235.07 L136.60 234.98 L137.40 237.17 L138.20 235.23 L139.00 236.25 L139.80 235.74 L140.60 234.78 L141.40 236.19 L142.20 234.17 L143.00 235.52 L143.80 233.77 L144.60 234.56 L145.40 233.86 L146.20 234.01 L147.00 236.15 L147.80 235.74 L148.60 234.38 L149.40 236.30 L150.20 234.47 L151.00 235.24 L151.80 236.83 L152.60 236.38 L153.40 234.91 L154.20 237.69 L155.00 235.43 L155.80 235.57 L156.60 237.07 L157.40 235.63 L158.20 235.39 L159.00 234.54 L159.80 234.38 L160.60 234.75 L161.40 233.73 L162.20 234.80 L163.00 234.12 L163.80 234.36 L164.00 234.87 L164.50 248.40 L164.60 235.88 L165.00 233.21 L165.40 234.45 L166.20 234.72 L166.30 235.07 L166.80 245.46 L167.00 235.60 L167.30 233.37 L167.80 233.55 L168.30 235.27 L168.60 233.46 L168.80 243.88 L169.30 234.34 L169.40 235.73 L170.20 235.45 L171.00 233.75 L171.80 233.57 L172.60 235.22 L173.40 235.82 L174.20 233.59 L175.00 235.26 L175.00 235.85 L175.50 247.11 L175.80 235.65 L176.00 234.51 L176.60 234.81 L176.80 234.46 L177.30 246.40 L177.40 234.26 L177.80 234.19 L178.20 233.31 L178.50 235.98 L179.00 249.38 L179.00 233.12 L179.50 233.16 L179.80 235.89 L180.60 233.72 L181.40 235.11 L182.20 233.77 L183.00 235.19 L183.80 234.92 L184.60 234.55 L185.40 234.41 L186.20 235.06 L187.00 234.28 L187.80 234.47 L188.60 234.87 L189.40 235.22 L190.20 234.94 L191.00 234.54 L191.80 235.30 L192.60 234.44 L193.40 234.22 L194.20 234.52 L195.00 234.73 L195.80 234.27 L196.60 234.41 L197.40 234.64 L198.20 234.89 L199.00 234.36 L199.80 234.63 L200.60 235.27 L201.40 235.38 L202.20 234.99 L203.00 235.03 L203.80 234.90 L204.60 234.37 L205.40 234.24 L206.20 234.22 L207.00 235.29 L207.80 235.04 L208.60 235.36 L209.40 234.23 L210.20 234.96 L211.00 234.78 L211.80 235.08 L212.60 234.58 L213.40 235.40 L214.20 234.29 L215.00 234.86 L215.80 235.08 L216.60 235.28 L217.40 235.08 L218.20 235.04 L219.00 235.15 L219.80 235.30 L220.60 234.62 L221.40 235.02 L222.20 235.28 L223.00 235.25 L223.80 234.70 L224.60 235.15 L225.40 235.24 L226.20 234.89 L227.00 234.95 L227.80 234.66 L228.60 234.90 L229.40 234.93 L230.20 234.30 L231.00 234.97 L231.80 235.39 L232.60 235.26 L233.40 235.07 L234.20 234.67 L235.00 235.08 L235.80 234.90 L236.60 233.30 L237.40 233.94 L238.20 232.73 L239.00 233.80 L239.80 232.65 L240.60 233.56 L241.40 233.37 L242.20 232.97 L243.00 233.72 L243.80 233.40 L244.60 233.58 L245.40 234.07 L246.20 233.01 L247.00 232.62 L247.80 233.08 L248.60 233.69 L249.40 232.92 L250.20 232.87 L251.00 234.05 L251.80 233.66 L252.60 233.31 L253.40 234.03 L254.20 233.12 L255.00 233.67 L255.80 232.92 L256.60 233.29 L257.40 233.89 L258.20 234.06 L259.00 234.01 L259.80 233.22 L260.60 233.53 L261.40 233.11 L262.20 232.82 L263.00 233.39 L263.80 233.94 L264.60 233.96 L265.40 233.74 L266.20 234.12 L267.00 233.04 L267.80 232.87 L268.60 233.32 L269.40 233.04 L270.20 232.94 L271.00 233.26 L271.80 233.60 L272.60 233.39 L273.40 233.10 L274.20 233.94 L275.00 234.17 L275.80 233.32 L276.60 232.72 L277.40 232.65 L278.20 234.00 L279.00 232.67 L279.80 233.73 L280.60 233.51 L281.40 233.09 L282.20 233.87 L283.00 232.63 L283.80 232.82 L284.60 233.33 L285.40 232.64 L286.20 233.93 L287.00 232.98 L287.80 232.83 L288.60 232.68 L289.40 233.61 L290.20 233.31 L291.00 233.61 L291.80 233.65 L292.60 233.89 L293.40 234.13 L294.20 233.70 L295.00 232.92 L295.80 233.36 L296.60 232.89 L297.40 232.62 L298.20 233.36 L299.00 233.74 L299.80 232.89 L300.60 232.45 L301.40 232.63 L302.20 233.47 L303.00 233.05 L303.80 233.27 L304.50 235.07 L305.50 236.92 L306.28 233.11 L307.11 243.32 L308.07 234.68 L309.27 237.90 L310.23 232.25 L311.32 237.52 L312.43 235.73 L313.54 238.65 L314.38 235.08 L315.12 244.22 L316.06 236.28 L317.05 249.50 L317.90 235.45 L318.81 250.33 L319.56 235.63 L320.36 245.11 L321.32 232.29 L322.44 241.86 L323.30 231.88 L324.15 244.04 L325.21 233.30 L326.25 238.98 L327.15 233.81 L328.33 249.12 L329.36 231.56 L330.25 247.44 L331.06 234.32 L331.99 237.65 L333.19 235.50 L333.99 246.12 L334.84 233.38 L335.81 241.67 L336.68 233.46 L337.71 241.09 L338.51 235.16 L339.37 250.73 L340.36 235.12 L341.22 249.08 L341.97 232.20 L342.71 246.99 L343.77 232.40 L344.67 249.22 L345.67 231.95 L346.48 239.70 L347.24 233.53 L347.98 250.39 L348.89 234.06 L349.92 248.24 L351.03 233.43 L351.89 239.21 L352.60 233.50 L353.65 244.34 L354.74 234.80 L355.75 235.67 L356.60 232.75 L357.40 232.80 L358.20 232.11 L359.00 232.75 L359.80 232.87 L360.60 232.42 L361.40 232.47 L362.20 232.10 L363.00 232.44 L363.80 232.40 L364.60 232.51 L365.40 231.93 L366.20 232.87 L367.00 232.42 L367.80 232.30 L368.60 232.70 L369.40 232.46 L370.20 232.39 L371.00 232.59 L371.80 231.97 L372.60 232.44 L373.40 232.31 L374.20 232.86 L375.00 232.82 L375.80 232.17 L376.60 232.37 L377.40 232.03 L378.20 232.33 L379.00 232.72 L379.80 232.80 L380.60 232.38 L381.40 232.22 L382.20 232.09 L383.00 232.52 L383.80 232.83 L384.60 232.03 L385.40 232.68 L386.20 231.92 L387.00 232.09 L387.80 232.13 L388.60 232.59 L389.40 232.22 L390.20 232.26 L391.00 232.52 L391.80 232.00 L392.60 232.63 L393.40 232.02 L394.20 232.41 L395.00 232.15 L395.80 232.10 L396.60 232.43 L397.40 232.34 L398.20 232.28 L399.00 232.31 L399.80 232.43 L400.60 232.06 L401.40 232.10 L402.20 232.53 L403.00 232.54 L403.80 232.43 L404.60 232.75 L405.40 232.51 L406.20 232.76 L407.00 232.13 L407.80 232.64 L408.60 232.71 L409.40 232.80 L410.20 232.22 L411.00 232.21 L411.80 232.82 L412.60 232.12 L413.40 232.90 L414.20 232.79 L415.00 232.03 L415.80 232.14 L416.60 232.63 L417.40 232.16 L418.20 232.00 L419.00 232.73 L419.80 232.32 L420.60 232.69 L421.40 232.03 L422.20 232.30 L423.00 232.59 L423.80 231.92 L424.60 232.10 L425.40 232.58 L426.20 232.81 L427.00 232.87 L427.80 232.02 L428.60 232.41 L429.40 232.66 L430.20 232.40 L431.00 232.59 L431.80 232.09 L432.60 231.97 L433.40 232.01 L434.20 231.94 L435.00 232.45 L435.80 232.41 L436.60 232.47 L437.40 232.05 L438.20 232.08 L439.00 232.10 L439.80 232.74 L440.60 232.89 L441.40 232.83 L442.20 232.00 L443.00 231.96 L443.80 232.85 L444.60 232.36 L445.40 232.66 L446.20 232.23 L447.00 232.37 L447.80 232.42 L448.60 232.33 L449.40 232.50 L450.20 231.91 L451.00 232.60 L451.80 232.74 L452.60 232.08 L453.40 232.35 L454.20 232.64 L455.00 231.81 L455.50 234.06 L455.80 230.71 L456.00 232.79 L456.00 241.66 L456.50 233.31 L456.50 240.80 L456.60 230.56 L457.00 233.82 L457.21 234.15 L457.40 232.37 L457.71 240.38 L458.20 229.78 L458.21 232.44 L459.00 234.34 L459.80 233.87 L460.60 233.36 L461.40 234.18 L462.20 232.97 L463.00 231.80 L463.01 231.83 L463.51 242.70 L463.80 232.82 L464.01 230.94 L464.60 232.32 L465.40 234.81 L466.20 233.89 L467.00 231.04 L467.80 234.44 L468.60 233.57 L469.40 233.75 L470.20 233.94 L471.00 231.81 L471.80 234.36 L472.60 234.28 L473.40 233.31 L474.20 233.69 L475.00 233.68 L475.80 231.81 L476.60 233.46 L477.40 230.07 L478.20 231.48 L479.00 232.14 L479.80 229.76 L480.60 231.55 L481.36 231.96 L481.40 233.02 L481.86 236.55 L482.20 232.94 L482.36 231.29 L483.00 230.91 L483.80 234.61 L484.60 233.16 L485.40 231.46 L486.20 233.13 L486.24 232.64 L486.74 244.16 L487.00 232.66 L487.24 231.76 L487.80 232.47 L488.60 231.73 L489.40 234.90 L490.20 233.04 L491.00 233.35 L491.80 233.66 L492.60 234.80 L493.40 229.82 L494.20 232.90 L495.00 233.54 L495.80 231.03 L496.60 231.79 L497.19 234.41 L497.40 229.96 L497.69 243.98 L498.19 230.93 L498.20 230.72 L499.00 231.65 L499.80 230.21 L500.60 231.00 L501.40 234.41 L502.20 232.56 L503.00 232.34 L503.38 232.44 L503.80 234.73 L503.88 243.22 L504.38 230.06 L504.60 232.65 L505.40 234.87 L506.20 233.02 L507.00 233.91 L507.80 230.10 L508.60 232.81 L509.40 233.65 L510.20 229.93 L510.60 232.43 L511.00 234.54 L511.10 240.73 L511.60 234.44 L511.80 230.53 L512.25 231.95 L512.60 232.15 L512.75 237.42 L513.25 234.73 L513.40 230.58 L514.20 232.28 L515.00 232.88 L515.80 230.00 L516.60 234.62 L517.40 231.89 L518.20 232.44 L518.54 234.40 L519.00 232.81 L519.04 241.84 L519.54 233.16 L519.80 231.60 L520.60 231.19 L521.40 233.11 L521.52 231.37 L522.02 241.13 L522.20 232.62 L522.52 234.21 L523.00 231.17 L523.80 233.43 L524.60 231.24 L524.63 229.98 L525.13 237.60 L525.40 229.77 L525.63 231.89 L526.20 230.97 L527.00 229.92 L527.06 233.47 L527.56 239.28 L527.80 230.51 L528.06 233.89 L528.60 233.62 L529.40 231.73 L529.70 234.38 L530.20 234.37 L530.20 240.48 L530.70 230.85 L531.00 233.59 L531.80 229.96 L532.60 234.84 L533.40 234.61 L534.20 230.08 L535.00 234.41 L535.80 231.93 L536.60 232.18 L537.40 234.76 L538.20 231.89 L539.00 232.23 L539.80 232.72 L540.60 232.47 L541.40 232.16 L542.20 232.77 L543.00 232.58 L543.80 232.32 L544.60 231.74 L545.40 232.35 L546.20 232.15 L547.00 231.84 L547.80 231.66 L548.60 232.23 L549.40 231.75 L550.20 232.13 L551.00 232.40 L551.80 232.15 L552.60 231.91 L553.40 232.30 L554.20 232.10 L555.00 232.53 L555.80 232.24 L556.60 232.80 L557.40 232.74 L558.20 232.48 L559.00 231.89 L559.80 231.74 L560.60 232.67 L561.40 232.54 L562.20 232.35 L563.00 232.03 L563.80 231.93 L564.60 232.42 L565.40 232.28 L566.20 232.31 L567.00 232.36 L567.80 232.50 L568.60 231.83 L569.40 231.90 L570.20 232.78 L571.00 232.70 L571.80 232.65 L572.60 231.65 L573.40 231.67 L574.20 231.93 L575.00 232.11 L575.80 232.35 L576.60 231.72 L577.40 232.25 L578.20 231.69 L579.00 231.70 L579.80 232.41 L580.60 232.26 L581.40 232.36 L582.20 232.05 L583.00 232.17 L583.80 231.85 L584.60 232.01 L585.40 232.49 L586.20 232.61 L587.00 231.69 L587.80 231.74 L588.60 232.57 L589.40 232.35 L590.20 232.52 L591.00 231.86 L591.80 232.11 L592.60 231.91 L593.40 232.57 L594.20 232.04 L595.00 232.38 L595.80 232.79 L596.60 231.99 L597.40 232.26 L598.20 232.50 L599.00 232.70 L599.80 232.11 L600.60 232.04 L601.40 231.72 L602.20 232.65 L603.00 231.69 L603.80 231.70 L604.60 232.28 L605.40 232.18 L606.20 232.42 L607.00 231.96 L607.80 232.53 L608.60 231.69 L609.40 231.86 L610.20 232.39 L611.00 231.70 L611.80 231.96 L612.60 232.47 L613.40 232.43 L614.20 231.94 L615.00 231.77 L615.80 232.03 L616.60 232.47 L617.40 232.04 L618.20 231.74 L619.00 232.45 L619.80 232.28 L620.60 232.70 L621.40 232.73 L622.20 232.70 L623.00 232.13 L623.80 232.56 L624.60 231.97 L625.40 231.98 L626.20 232.08 L627.00 232.72 L627.80 232.67 L628.60 231.90 L629.40 232.03 L630.20 232.04 L631.00 232.04 L631.80 232.07 L632.60 232.07 L633.40 231.83 L634.20 232.28 L635.00 232.56 L635.80 232.25 L636.60 232.60 L637.40 232.28 L638.20 231.81 L639.00 232.51 L639.80 232.66 L640.60 231.94 L641.40 231.63 L642.20 232.22 L643.00 232.25 L643.80 232.28 L644.60 232.76 L645.40 232.38 L646.20 232.57 L647.00 231.68 L647.80 232.26 L648.60 232.55 L649.40 231.70 L650.20 231.70 L651.00 232.48 L651.80 232.68 L652.60 231.70 L653.40 232.36 L654.20 231.77 L655.00 232.49 L655.80 232.38 L656.60 231.89 L657.40 231.86 L658.20 232.52 L659.00 232.23 L659.80 232.52 L660.60 232.07 L661.40 232.01 L662.20 232.76 L663.00 232.41 L663.80 232.19 L664.60 232.24 L665.40 232.47 L666.20 232.45 L667.00 232.70 L667.80 232.09 L668.60 232.59 L669.40 232.40 L670.20 232.62 L671.00 232.57 L671.80 232.60 L672.60 232.67 L673.40 232.75 L674.20 232.37 L675.00 232.23 L675.80 232.45 L676.60 232.56 L677.40 232.11 L678.20 232.10 L679.00 231.78 L679.80 232.49 L680.60 232.79 L681.40 232.05 L682.20 231.80 L683.00 231.85 L683.80 232.11 L684.60 231.95 L685.40 232.76 L686.20 231.67 L687.00 231.97 L687.80 231.74 L688.60 232.38 L689.40 232.53 L690.20 231.82 L691.00 231.67 L691.80 232.15 L692.60 232.30 L693.40 232.69 L694.20 231.64 L695.00 231.73 L695.80 231.82 L696.60 231.86 L697.40 231.88 L698.20 232.46 L699.00 232.31 L699.80 231.87 L700.60 231.82 L701.40 231.94 L702.20 231.81 L703.00 232.51 L703.80 231.97 L704.60 232.26 L705.40 232.58 L706.20 232.18 L707.00 231.91 L707.80 232.66 L708.60 232.70 L709.40 232.01 L710.20 232.26 L711.00 232.75 L711.80 232.18 L712.60 231.87 L713.40 231.66 L714.20 232.74 L715.00 232.56 L715.80 232.06 L716.60 232.23 L717.40 232.22 L718.20 231.93 L719.00 232.79" fill="none" stroke="#1a1a1a" stroke-width="0.7" stroke-linejoin="round"/>
<rect x="78.50" y="233.30" width="3.80" height="4.20" fill="none" stroke="#333" stroke-width="0.6"/>
<rect x="78.50" y="267.60" width="3.80" height="3.60" fill="none" stroke="#333" stroke-width="0.6"/>
<line x1="79.50" y1="270.20" x2="82.50" y2="270.20" stroke="#333" stroke-width="1"/>
<line x1="79.50" y1="280.50" x2="82.50" y2="280.50" stroke="#333" stroke-width="1"/>
<line x1="79.50" y1="291.00" x2="82.50" y2="291.00" stroke="#333" stroke-width="1"/>
<line x1="79.50" y1="301.30" x2="82.50" y2="301.30" stroke="#333" stroke-width="1"/>
<line x1="79.50" y1="311.00" x2="82.50" y2="311.00" stroke="#333" stroke-width="1"/>
<path d="M90.34 270.30h1.6M98.38 270.30h1.6M106.42 270.30h1.6M114.46 270.30h1.6M122.50 270.30h1.6M130.54 270.30h1.6M138.58 270.30h1.6M146.62 270.30h1.6M154.66 270.30h1.6M162.70 270.30h1.6M170.74 270.30h1.6M178.78 270.30h1.6M186.82 270.30h1.6M194.86 270.30h1.6M202.90 270.30h1.6M210.94 270.30h1.6M218.98 270.30h1.6M227.02 270.30h1.6M235.06 270.30h1.6M243.10 270.30h1.6M251.14 270.30h1.6M259.18 270.30h1.6M267.22 270.30h1.6M275.26 270.30h1.6M283.30 270.30h1.6M291.34 270.30h1.6M299.38 270.30h1.6M307.42 270.30h1.6M315.46 270.30h1.6M323.50 270.30h1.6M331.54 270.30h1.6M339.58 270.30h1.6M347.62 270.30h1.6M355.66 270.30h1.6M363.70 270.30h1.6M371.74 270.30h1.6M379.78 270.30h1.6M387.82 270.30h1.6M395.86 270.30h1.6M403.90 270.30h1.6M411.94 270.30h1.6M419.98 270.30h1.6M428.02 270.30h1.6M436.06 270.30h1.6M444.10 270.30h1.6M452.14 270.30h1.6M460.18 270.30h1.6M468.22 270.30h1.6M476.26 270.30h1.6M484.30 270.30h1.6M492.34 270.30h1.6M500.38 270.30h1.6M508.42 270.30h1.6M516.46 270.30h1.6M524.50 270.30h1.6M532.54 270.30h1.6M540.58 270.30h1.6M548.62 270.30h1.6M556.66 270.30h1.6M564.70 270.30h1.6M572.74 270.30h1.6M580.78 270.30h1.6M588.82 270.30h1.6M596.86 270.30h1.6M604.90 270.30h1.6M612.94 270.30h1.6M620.98 270.30h1.6M629.02 270.30h1.6M637.06 270.30h1.6M645.10 270.30h1.6M653.14 270.30h1.6M661.18 270.30h1.6M669.22 270.30h1.6M677.26 270.30h1.6M685.30 270.30h1.6M693.34 270.30h1.6M701.38 270.30h1.6M709.42 270.30h1.6M717.46 270.30h1.6" stroke="#777" stroke-width="1.0" fill="none"/>
<path d="M90.34 291.30h1.6M98.38 291.30h1.6M106.42 291.30h1.6M114.46 291.30h1.6M122.50 291.30h1.6M130.54 291.30h1.6M138.58 291.30h1.6M146.62 291.30h1.6M154.66 291.30h1.6M162.70 291.30h1.6M170.74 291.30h1.6M178.78 291.30h1.6M186.82 291.30h1.6M194.86 291.30h1.6M202.90 291.30h1.6M210.94 291.30h1.6M218.98 291.30h1.6M227.02 291.30h1.6M235.06 291.30h1.6M243.10 291.30h1.6M251.14 291.30h1.6M259.18 291.30h1.6M267.22 291.30h1.6M275.26 291.30h1.6M283.30 291.30h1.6M291.34 291.30h1.6M299.38 291.30h1.6M307.42 291.30h1.6M315.46 291.30h1.6M323.50 291.30h1.6M331.54 291.30h1.6M339.58 291.30h1.6M347.62 291.30h1.6M355.66 291.30h1.6M363.70 291.30h1.6M371.74 291.30h1.6M379.78 291.30h1.6M387.82 291.30h1.6M395.86 291.30h1.6M403.90 291.30h1.6M411.94 291.30h1.6M419.98 291.30h1.6M428.02 291.30h1.6M436.06 291.30h1.6M444.10 291.30h1.6M452.14 291.30h1.6M460.18 291.30h1.6M468.22 291.30h1.6M476.26 291.30h1.6M484.30 291.30h1.6M492.34 291.30h1.6M500.38 291.30h1.6M508.42 291.30h1.6M516.46 291.30h1.6M524.50 291.30h1.6M532.54 291.30h1.6M540.58 291.30h1.6M548.62 291.30h1.6M556.66 291.30h1.6M564.70 291.30h1.6M572.74 291.30h1.6M580.78 291.30h1.6M588.82 291.30h1.6M596.86 291.30h1.6M604.90 291.30h1.6M612.94 291.30h1.6M620.98 291.30h1.6M629.02 291.30h1.6M637.06 291.30h1.6M645.10 291.30h1.6M653.14 291.30h1.6M661.18 291.30h1.6M669.22 291.30h1.6M677.26 291.30h1.6M685.30 291.30h1.6M693.34 291.30h1.6M701.38 291.30h1.6M709.42 291.30h1.6M717.46 291.30h1.6" stroke="#777" stroke-width="1.0" fill="none"/>
<path d="M90.34 301.10h1.6M98.38 301.10h1.6M106.42 301.10h1.6M114.46 301.10h1.6M122.50 301.10h1.6M130.54 301.10h1.6M138.58 301.10h1.6M146.62 301.10h1.6M154.66 301.10h1.6M162.70 301.10h1.6M170.74 301.10h1.6M178.78 301.10h1.6M186.82 301.10h1.6M194.86 301.10h1.6M202.90 301.10h1.6M210.94 301.10h1.6M218.98 301.10h1.6M227.02 301.10h1.6M235.06 301.10h1.6M243.10 301.10h1.6M251.14 301.10h1.6M259.18 301.10h1.6M267.22 301.10h1.6M275.26 301.10h1.6M283.30 301.10h1.6M291.34 301.10h1.6M299.38 301.10h1.6M307.42 301.10h1.6M315.46 301.10h1.6M323.50 301.10h1.6M331.54 301.10h1.6M339.58 301.10h1.6M347.62 301.10h1.6M355.66 301.10h1.6M363.70 301.10h1.6M371.74 301.10h1.6M379.78 301.10h1.6M387.82 301.10h1.6M395.86 301.10h1.6M403.90 301.10h1.6M411.94 301.10h1.6M419.98 301.10h1.6M428.02 301.10h1.6M436.06 301.10h1.6M444.10 301.10h1.6M452.14 301.10h1.6M460.18 301.10h1.6M468.22 301.10h1.6M476.26 301.10h1.6M484.30 301.10h1.6M492.34 301.10h1.6M500.38 301.10h1.6M508.42 301.10h1.6M516.46 301.10h1.6M524.50 301.10h1.6M532.54 301.10h1.6M540.58 301.10h1.6M548.62 301.10h1.6M556.66 301.10h1.6M564.70 301.10h1.6M572.74 301.10h1.6M580.78 301.10h1.6M588.82 301.10h1.6M596.86 301.10h1.6M604.90 301.10h1.6M612.94 301.10h1.6M620.98 301.10h1.6M629.02 301.10h1.6M637.06 301.10h1.6M645.10 301.10h1.6M653.14 301.10h1.6M661.18 301.10h1.6M669.22 301.10h1.6M677.26 301.10h1.6M685.30 301.10h1.6M693.34 301.10h1.6M701.38 301.10h1.6M709.42 301.10h1.6M717.46 301.10h1.6" stroke="#777" stroke-width="1.0" fill="none"/>
<path d="M90.34 280.60h1.6M98.38 280.60h1.6M106.42 280.60h1.6M114.46 280.60h1.6M122.50 280.60h1.6M130.54 280.60h1.6M138.58 280.60h1.6M146.62 280.60h1.6M154.66 280.60h1.6M162.70 280.60h1.6M170.74 280.60h1.6M178.78 280.60h1.6M186.82 280.60h1.6M194.86 280.60h1.6M202.90 280.60h1.6M210.94 280.60h1.6M218.98 280.60h1.6M227.02 280.60h1.6M235.06 280.60h1.6M243.10 280.60h1.6M251.14 280.60h1.6M259.18 280.60h1.6M267.22 280.60h1.6M275.26 280.60h1.6M283.30 280.60h1.6M291.34 280.60h1.6M299.38 280.60h1.6M307.42 280.60h1.6M315.46 280.60h1.6M323.50 280.60h1.6M331.54 280.60h1.6M339.58 280.60h1.6M347.62 280.60h1.6M355.66 280.60h1.6M363.70 280.60h1.6M371.74 280.60h1.6M379.78 280.60h1.6M387.82 280.60h1.6M395.86 280.60h1.6M403.90 280.60h1.6M411.94 280.60h1.6M419.98 280.60h1.6M428.02 280.60h1.6M436.06 280.60h1.6M444.10 280.60h1.6M452.14 280.60h1.6M460.18 280.60h1.6M468.22 280.60h1.6M476.26 280.60h1.6M484.30 280.60h1.6M492.34 280.60h1.6M500.38 280.60h1.6M508.42 280.60h1.6M516.46 280.60h1.6M524.50 280.60h1.6M532.54 280.60h1.6M540.58 280.60h1.6M548.62 280.60h1.6M556.66 280.60h1.6M564.70 280.60h1.6M572.74 280.60h1.6M580.78 280.60h1.6M588.82 280.60h1.6M596.86 280.60h1.6M604.90 280.60h1.6M612.94 280.60h1.6M620.98 280.60h1.6M629.02 280.60h1.6M637.06 280.60h1.6M645.10 280.60h1.6M653.14 280.60h1.6M661.18 280.60h1.6M669.22 280.60h1.6M677.26 280.60h1.6M685.30 280.60h1.6M693.34 280.60h1.6M701.38 280.60h1.6M709.42 280.60h1.6M717.46 280.60h1.6" stroke="#ccc" stroke-width="1.0" fill="none"/>
<path d="M90.34 311.10h1.6M98.38 311.10h1.6M106.42 311.10h1.6M114.46 311.10h1.6M122.50 311.10h1.6M130.54 311.10h1.6M138.58 311.10h1.6M146.62 311.10h1.6M154.66 311.10h1.6M162.70 311.10h1.6M170.74 311.10h1.6M178.78 311.10h1.6M186.82 311.10h1.6M194.86 311.10h1.6M202.90 311.10h1.6M210.94 311.10h1.6M218.98 311.10h1.6M227.02 311.10h1.6M235.06 311.10h1.6M243.10 311.10h1.6M251.14 311.10h1.6M259.18 311.10h1.6M267.22 311.10h1.6M275.26 311.10h1.6M283.30 311.10h1.6M291.34 311.10h1.6M299.38 311.10h1.6M307.42 311.10h1.6M315.46 311.10h1.6M323.50 311.10h1.6M331.54 311.10h1.6M339.58 311.10h1.6M347.62 311.10h1.6M355.66 311.10h1.6M363.70 311.10h1.6M371.74 311.10h1.6M379.78 311.10h1.6M387.82 311.10h1.6M395.86 311.10h1.6M403.90 311.10h1.6M411.94 311.10h1.6M419.98 311.10h1.6M428.02 311.10h1.6M436.06 311.10h1.6M444.10 311.10h1.6M452.14 311.10h1.6M460.18 311.10h1.6M468.22 311.10h1.6M476.26 311.10h1.6M484.30 311.10h1.6M492.34 311.10h1.6M500.38 311.10h1.6M508.42 311.10h1.6M516.46 311.10h1.6M524.50 311.10h1.6M532.54 311.10h1.6M540.58 311.10h1.6M548.62 311.10h1.6M556.66 311.10h1.6M564.70 311.10h1.6M572.74 311.10h1.6M580.78 311.10h1.6M588.82 311.10h1.6M596.86 311.10h1.6M604.90 311.10h1.6M612.94 311.10h1.6M620.98 311.10h1.6M629.02 311.10h1.6M637.06 311.10h1.6M645.10 311.10h1.6M653.14 311.10h1.6M661.18 311.10h1.6M669.22 311.10h1.6M677.26 311.10h1.6M685.30 311.10h1.6M693.34 311.10h1.6M701.38 311.10h1.6M709.42 311.10h1.6M717.46 311.10h1.6" stroke="#ccc" stroke-width="1.0" fill="none"/>
<path d="M83.00 305.22 L83.60 305.53 L84.20 305.43 L84.80 304.15 L85.40 305.80 L86.00 302.85 L86.60 304.54 L87.20 303.27 L87.80 304.60 L88.40 301.29 L89.00 304.35 L89.60 299.84 L90.20 299.55 L90.80 300.82 L91.40 305.07 L92.00 304.47 L92.60 305.34 L93.20 303.26 L93.80 303.14 L94.40 304.64 L95.00 304.11 L95.60 300.43 L96.20 302.04 L96.80 300.47 L97.40 304.14 L98.00 301.47 L98.60 304.76 L99.20 302.39 L99.80 301.80 L100.40 305.77 L101.00 301.62 L101.60 301.50 L102.20 305.54 L102.80 304.17 L103.40 300.82 L104.00 301.06 L104.60 302.81 L105.20 302.82 L105.80 305.34 L106.40 299.44 L107.00 305.06 L107.60 304.53 L108.20 305.59 L108.80 300.19 L109.40 304.16 L110.00 301.68 L110.60 305.81 L111.20 302.78 L111.80 294.00 L112.40 304.63 L113.00 305.90 L113.60 305.86 L114.20 304.98 L114.80 302.35 L115.40 304.36 L116.00 305.88 L116.60 305.23 L117.20 304.71 L117.80 304.59 L118.40 305.66 L119.00 305.51 L119.60 305.35 L120.20 305.47 L120.80 305.37 L121.40 304.97 L122.00 305.34 L122.60 305.80 L123.20 302.78 L123.80 304.55 L124.40 304.93 L125.00 305.27 L125.60 304.73 L126.20 305.43 L126.80 304.73 L127.40 305.67 L128.00 305.86 L128.60 305.03 L129.20 304.40 L129.80 305.79 L130.40 305.34 L131.00 305.41 L131.60 305.50 L132.20 305.30 L132.80 305.22 L133.40 305.25 L134.00 304.15 L134.60 304.89 L135.20 304.49 L135.80 303.06 L136.40 303.17 L137.00 304.67 L137.60 302.28 L138.20 304.78 L138.80 305.16 L139.40 303.71 L140.00 304.60 L140.60 304.31 L141.20 302.24 L141.80 304.27 L142.40 304.71 L143.00 305.82 L143.60 304.85 L144.20 305.26 L144.80 304.36 L145.40 305.11 L146.00 305.84 L146.60 304.73 L147.20 304.10 L147.80 305.12 L148.40 304.35 L149.00 305.70 L149.60 304.88 L150.20 304.62 L150.80 304.78 L151.40 305.74 L152.00 304.57 L152.60 304.99 L153.20 304.67 L153.80 304.99 L154.40 304.96 L155.00 305.22 L155.60 304.63 L156.20 303.26 L156.80 304.59 L157.40 305.51 L158.00 304.58 L158.60 305.88 L159.20 305.19 L159.80 305.26 L160.40 301.40 L161.00 304.64 L161.60 301.59 L162.20 300.96 L162.80 303.15 L163.40 304.92 L164.00 305.70 L164.60 304.13 L165.20 304.87 L165.80 305.37 L166.40 304.97 L167.00 300.39 L167.60 300.13 L168.20 304.22 L168.80 305.35 L169.40 304.62 L170.00 302.83 L170.60 305.09 L171.20 301.35 L171.80 303.64 L172.40 305.58 L173.00 301.40 L173.60 305.86 L174.20 300.99 L174.80 304.49 L175.40 305.81 L176.00 299.67 L176.60 304.37 L177.20 301.36 L177.80 301.66 L178.40 300.93 L179.00 305.44 L179.60 304.34 L180.20 304.67 L180.80 304.98 L181.40 300.98 L182.00 304.37 L182.60 305.01 L183.20 305.10 L183.80 304.57 L184.40 304.56 L185.00 303.09 L185.60 304.77 L186.20 304.42 L186.80 305.28 L187.40 305.30 L188.00 304.32 L188.60 304.53 L189.20 304.96 L189.80 302.72 L190.40 304.20 L191.00 305.81 L191.60 304.50 L192.20 305.85 L192.80 305.58 L193.40 305.22 L194.00 304.52 L194.60 305.20 L195.20 304.79 L195.80 305.60 L196.40 305.55 L197.00 305.63 L197.60 305.17 L198.20 305.43 L198.80 302.77 L199.40 304.17 L200.00 304.97 L200.60 304.10 L201.20 305.70 L201.80 304.87 L202.40 304.28 L203.00 304.39 L203.60 304.79 L204.20 304.37 L204.80 304.60 L205.40 304.62 L206.00 301.66 L206.60 304.76 L207.20 305.34 L207.80 304.95 L208.40 304.31 L209.00 304.62 L209.60 305.41 L210.20 302.89 L210.80 304.24 L211.40 305.85 L212.00 304.66 L212.60 304.61 L213.20 305.39 L213.80 304.53 L214.40 305.79 L215.00 304.88 L215.60 304.11 L216.20 305.50 L216.80 304.18 L217.40 305.88 L218.00 304.73 L218.60 304.23 L219.20 304.98 L219.80 304.20 L220.40 304.19 L221.00 304.21 L221.60 304.83 L222.20 300.76 L222.80 304.42 L223.40 304.82 L224.00 304.25 L224.60 304.29 L225.20 305.76 L225.80 305.64 L226.40 304.13 L227.00 304.98 L227.60 304.78 L228.20 305.41 L228.80 304.65 L229.40 305.59 L230.00 304.31 L230.60 304.26 L231.20 305.57 L231.80 304.33 L232.40 304.54 L233.00 304.87 L233.60 304.54 L234.20 303.86 L234.80 304.61 L235.40 304.28 L236.00 304.67 L236.60 305.10 L237.20 305.28 L237.80 305.13 L238.40 305.57 L239.00 305.82 L239.60 305.36 L240.20 305.56 L240.80 304.33 L241.40 304.40 L242.00 305.32 L242.60 304.21 L243.20 303.98 L243.80 304.33 L244.40 305.65 L245.00 305.20 L245.60 304.87 L246.20 302.23 L246.80 305.59 L247.40 304.27 L248.00 304.41 L248.60 304.90 L249.20 305.53 L249.80 304.67 L250.40 304.93 L251.00 304.89 L251.60 305.79 L252.20 305.85 L252.80 304.29 L253.40 301.41 L254.00 304.16 L254.60 304.97 L255.20 304.81 L255.80 304.60 L256.40 305.11 L257.00 305.45 L257.60 304.73 L258.20 305.87 L258.80 305.63 L259.40 304.82 L260.00 305.60 L260.60 304.17 L261.20 304.28 L261.80 305.72 L262.40 305.53 L263.00 305.33 L263.60 305.22 L264.20 302.50 L264.80 305.16 L265.40 304.80 L266.00 304.15 L266.60 304.79 L267.20 305.37 L267.80 305.87 L268.40 305.76 L269.00 305.31 L269.60 305.54 L270.20 305.17 L270.80 305.04 L271.40 304.24 L272.00 304.74 L272.60 305.47 L273.20 304.65 L273.80 304.59 L274.40 304.23 L275.00 305.31 L275.60 305.71 L276.20 305.61 L276.80 305.20 L277.40 305.03 L278.00 304.53 L278.60 305.08 L279.20 304.11 L279.80 304.42 L280.40 305.72 L281.00 305.20 L281.60 304.30 L282.20 305.10 L282.80 304.77 L283.40 304.48 L284.00 304.58 L284.60 305.72 L285.20 305.24 L285.80 304.50 L286.40 305.12 L287.00 305.68 L287.60 304.85 L288.20 305.05 L288.80 304.64 L289.40 305.19 L290.00 303.15 L290.60 305.11 L291.20 304.43 L291.80 305.17 L292.40 305.34 L293.00 304.21 L293.60 305.60 L294.20 304.67 L294.80 305.26 L295.40 304.51 L296.00 305.61 L296.60 304.28 L297.20 304.38 L297.80 304.37 L298.40 304.29 L299.00 305.43 L299.60 305.55 L300.20 305.76 L300.80 305.23 L301.40 303.03 L302.00 301.64 L302.60 305.32 L303.20 304.25 L303.80 303.61 L304.40 301.44 L305.00 304.99 L305.60 301.76 L306.20 303.93 L306.80 301.01 L307.40 303.59 L308.00 305.00 L308.60 305.52 L309.20 300.24 L309.80 302.35 L310.40 304.53 L311.00 302.85 L311.60 304.96 L312.20 300.34 L312.80 300.02 L313.40 304.11 L314.00 302.75 L314.60 301.86 L315.20 299.30 L315.80 304.90 L316.40 299.43 L317.00 305.34 L317.60 300.08 L318.20 304.88 L318.80 305.72 L319.40 304.15 L320.00 305.49 L320.60 305.67 L321.20 300.75 L321.80 305.46 L322.40 304.37 L323.00 304.86 L323.60 303.20 L324.20 304.59 L324.80 304.62 L325.40 301.49 L326.00 299.64 L326.60 304.62 L327.20 305.59 L327.80 303.23 L328.40 305.76 L329.00 301.44 L329.60 304.58 L330.20 304.77 L330.80 304.37 L331.40 305.85 L332.00 300.69 L332.60 301.86 L333.20 305.15 L333.80 304.53 L334.40 304.57 L335.00 302.49 L335.60 301.29 L336.20 304.85 L336.80 305.20 L337.40 304.20 L338.00 301.79 L338.60 301.34 L339.20 305.28 L339.80 304.77 L340.40 305.38 L341.00 305.81 L341.60 299.92 L342.20 304.24 L342.80 305.43 L343.40 304.80 L344.00 304.64 L344.60 303.19 L345.20 304.99 L345.80 304.47 L346.40 301.84 L347.00 304.36 L347.60 300.44 L348.20 301.12 L348.80 301.71 L349.40 300.04 L350.00 304.89 L350.60 303.21 L351.20 305.43 L351.80 299.82 L352.40 304.99 L353.00 304.17 L353.60 304.31 L354.20 305.20 L354.80 304.50 L355.40 300.56 L356.00 301.43 L356.60 305.27 L357.20 301.83 L357.80 301.60 L358.40 303.56 L359.00 305.46 L359.60 305.72 L360.20 304.38 L360.80 304.57 L361.40 302.59 L362.00 304.24 L362.60 305.22 L363.20 302.19 L363.80 305.34 L364.40 305.13 L365.00 304.36 L365.60 304.99 L366.20 305.72 L366.80 305.29 L367.40 305.51 L368.00 302.98 L368.60 304.74 L369.20 304.58 L369.80 305.25 L370.40 304.31 L371.00 302.13 L371.60 305.62 L372.20 304.19 L372.80 304.79 L373.40 305.40 L374.00 304.84 L374.60 301.48 L375.20 304.84 L375.80 304.21 L376.40 304.42 L377.00 305.52 L377.60 302.97 L378.20 302.09 L378.80 302.34 L379.40 305.78 L380.00 302.02 L380.60 304.31 L381.20 304.25 L381.80 305.08 L382.40 304.59 L383.00 305.85 L383.60 304.48 L384.20 305.75 L384.80 305.24 L385.40 304.69 L386.00 303.92 L386.60 305.79 L387.20 304.90 L387.80 305.13 L388.40 304.61 L389.00 304.56 L389.60 305.47 L390.20 304.34 L390.80 305.35 L391.40 304.28 L392.00 304.34 L392.60 304.26 L393.20 305.22 L393.80 304.39 L394.40 304.29 L395.00 304.55 L395.60 304.19 L396.20 304.32 L396.80 304.71 L397.40 305.25 L398.00 305.67 L398.60 304.61 L399.20 303.63 L399.80 304.85 L400.40 304.33 L401.00 305.46 L401.60 304.10 L402.20 304.66 L402.80 305.29 L403.40 305.61 L404.00 304.71 L404.60 305.01 L405.20 305.21 L405.80 304.39 L406.40 304.10 L407.00 305.49 L407.60 304.18 L408.20 303.46 L408.80 305.85 L409.40 304.53 L410.00 305.27 L410.60 305.26 L411.20 301.95 L411.80 305.15 L412.40 305.01 L413.00 304.65 L413.60 304.77 L414.20 305.46 L414.80 303.68 L415.40 304.47 L416.00 304.13 L416.60 304.29 L417.20 304.89 L417.80 304.96 L418.40 304.14 L419.00 305.48 L419.60 305.60 L420.20 305.39 L420.80 302.00 L421.40 305.88 L422.00 304.22 L422.60 304.28 L423.20 304.26 L423.80 304.11 L424.40 304.64 L425.00 304.80 L425.60 305.82 L426.20 305.34 L426.80 304.82 L427.40 302.70 L428.00 305.48 L428.60 305.65 L429.20 305.47 L429.80 305.75 L430.40 304.85 L431.00 305.28 L431.60 305.38 L432.20 304.44 L432.80 304.55 L433.40 305.48 L434.00 305.06 L434.60 302.24 L435.20 303.03 L435.80 302.05 L436.40 301.91 L437.00 305.82 L437.60 304.69 L438.20 303.22 L438.80 304.21 L439.40 305.46 L440.00 305.55 L440.60 305.75 L441.20 302.36 L441.80 304.89 L442.40 300.25 L443.00 304.23 L443.60 304.50 L444.20 301.25 L444.80 300.41 L445.40 301.79 L446.00 304.32 L446.60 304.25 L447.20 305.75 L447.80 304.17 L448.40 304.95 L449.00 301.57 L449.60 304.23 L450.20 303.18 L450.80 304.64 L451.40 302.24 L452.00 303.43 L452.60 304.48 L453.20 300.48 L453.80 304.69 L454.40 304.92 L455.00 302.06 L455.60 304.58 L456.20 301.98 L456.80 305.62 L457.40 304.91 L458.00 305.21 L458.60 302.11 L459.20 303.22 L459.80 305.19 L460.40 304.42 L461.00 303.99 L461.60 305.46 L462.20 300.72 L462.80 304.61 L463.40 304.16 L464.00 300.62 L464.60 305.02 L465.20 305.62 L465.80 302.73 L466.40 304.68 L467.00 304.30 L467.60 304.77 L468.20 305.80 L468.80 304.80 L469.40 301.90 L470.00 305.41 L470.60 301.95 L471.20 305.78 L471.80 304.56 L472.40 304.89 L473.00 303.78 L473.60 305.57 L474.20 304.54 L474.80 305.15 L475.40 305.72 L476.00 301.20 L476.60 304.39 L477.20 304.18 L477.80 304.59 L478.40 299.23 L479.00 302.69 L479.60 302.39 L480.20 303.88 L480.80 299.24 L481.40 305.43 L482.00 305.60 L482.60 302.48 L483.20 300.34 L483.80 302.76 L484.40 305.63 L485.00 305.41 L485.60 305.74 L486.20 304.79 L486.80 302.57 L487.40 303.60 L488.00 299.72 L488.60 304.98 L489.20 305.44 L489.80 302.41 L490.40 305.24 L491.00 303.92 L491.60 304.12 L492.20 302.30 L492.80 300.85 L493.40 301.23 L494.00 304.47 L494.60 304.31 L495.20 305.37 L495.80 304.98 L496.40 305.23 L497.00 301.38 L497.60 301.11 L498.20 304.72 L498.80 305.04 L499.40 304.64 L500.00 305.19 L500.60 301.78 L501.20 305.18 L501.80 304.34 L502.40 303.70 L503.00 302.78 L503.60 302.55 L504.20 304.39 L504.80 303.33 L505.40 305.35 L506.00 302.01 L506.60 305.71 L507.20 304.56 L507.80 301.30 L508.40 305.40 L509.00 305.07 L509.60 305.82 L510.20 304.18 L510.80 301.56 L511.40 304.76 L512.00 305.21 L512.60 305.77 L513.20 305.38 L513.80 304.52 L514.40 301.20 L515.00 304.51 L515.60 305.04 L516.20 305.48 L516.80 305.79 L517.40 305.12 L518.00 304.68 L518.60 301.71 L519.20 305.27 L519.80 305.52 L520.40 304.36 L521.00 305.21 L521.60 305.83 L522.20 303.53 L522.80 305.74 L523.40 305.46 L524.00 305.49 L524.60 305.30 L525.20 305.66 L525.80 305.85 L526.40 304.99 L527.00 301.71 L527.60 304.67 L528.20 304.18 L528.80 305.77 L529.40 304.64 L530.00 304.53 L530.60 305.12 L531.20 304.96 L531.80 304.57 L532.40 302.73 L533.00 304.67 L533.60 305.80 L534.20 304.55 L534.80 305.23 L535.40 304.31 L536.00 301.62 L536.60 304.29 L537.20 305.48 L537.80 305.67 L538.40 302.57 L539.00 303.22 L539.60 305.88 L540.20 305.43 L540.80 304.11 L541.40 304.94 L542.00 302.27 L542.60 305.10 L543.20 304.25 L543.80 305.04 L544.40 304.66 L545.00 304.96 L545.60 305.50 L546.20 303.27 L546.80 305.89 L547.40 305.04 L548.00 305.31 L548.60 303.69 L549.20 304.32 L549.80 304.12 L550.40 304.71 L551.00 304.66 L551.60 304.48 L552.20 303.76 L552.80 305.70 L553.40 304.62 L554.00 304.18 L554.60 305.79 L555.20 304.19 L555.80 305.61 L556.40 304.48 L557.00 304.21 L557.60 304.43 L558.20 305.71 L558.80 304.99 L559.40 304.34 L560.00 305.66 L560.60 305.69 L561.20 305.86 L561.80 305.76 L562.40 305.78 L563.00 304.23 L563.60 305.28 L564.20 303.46 L564.80 304.72 L565.40 304.51 L566.00 304.77 L566.60 304.84 L567.20 305.17 L567.80 302.58 L568.40 304.27 L569.00 305.43 L569.60 305.21 L570.20 305.40 L570.80 304.45 L571.40 300.92 L572.00 305.81 L572.60 304.84 L573.20 305.51 L573.80 304.41 L574.40 303.62 L575.00 304.50 L575.60 304.75 L576.20 304.64 L576.80 305.01 L577.40 305.33 L578.00 305.80 L578.60 305.53 L579.20 305.22 L579.80 305.52 L580.40 304.45 L581.00 301.66 L581.60 304.69 L582.20 301.47 L582.80 304.74 L583.40 305.32 L584.00 305.36 L584.60 305.88 L585.20 305.15 L585.80 304.62 L586.40 305.20 L587.00 304.35 L587.60 304.62 L588.20 305.43 L588.80 304.58 L589.40 305.86 L590.00 304.95 L590.60 305.28 L591.20 301.78 L591.80 305.18 L592.40 305.22 L593.00 305.88 L593.60 304.86 L594.20 304.77 L594.80 301.75 L595.40 305.05 L596.00 305.09 L596.60 303.81 L597.20 305.42 L597.80 304.33 L598.40 305.45 L599.00 301.90 L599.60 304.49 L600.20 304.34 L600.80 305.16 L601.40 305.16 L602.00 304.51 L602.60 304.88 L603.20 301.45 L603.80 305.19 L604.40 305.19 L605.00 305.27 L605.60 301.10 L606.20 303.12 L606.80 304.75 L607.40 305.28 L608.00 303.17 L608.60 305.45 L609.20 304.87 L609.80 304.15 L610.40 305.64 L611.00 304.45 L611.60 305.06 L612.20 304.69 L612.80 305.26 L613.40 303.21 L614.00 300.93 L614.60 299.56 L615.20 305.00 L615.80 302.25 L616.40 301.25 L617.00 305.69 L617.60 304.58 L618.20 305.73 L618.80 304.50 L619.40 305.82 L620.00 300.85 L620.60 301.69 L621.20 304.56 L621.80 304.23 L622.40 301.99 L623.00 305.05 L623.60 305.14 L624.20 305.11 L624.80 299.81 L625.40 301.02 L626.00 305.20 L626.60 303.91 L627.20 305.48 L627.80 302.49 L628.40 305.78 L629.00 304.48 L629.60 304.07 L630.20 302.52 L630.80 301.95 L631.40 301.29 L632.00 304.87 L632.60 304.36 L633.20 303.15 L633.80 290.50 L634.40 304.75 L635.00 305.86 L635.60 304.43 L636.20 302.06 L636.80 304.40 L637.40 303.02M644.00 291.50 L644.60 302.89 L645.20 303.04 L645.80 303.49 L646.40 303.64 L647.00 303.77 L647.60 303.77 L648.20 303.69 L648.80 303.07 L649.40 303.46 L650.00 303.69 L650.60 301.20 L651.20 302.85 L651.80 300.98 L652.40 303.71 L653.00 303.34 L653.60 303.19 L654.20 303.52 L654.80 302.99 L655.40 303.09 L656.00 302.65 L656.60 302.98 L657.20 303.90 L657.80 302.63 L658.40 302.71 L659.00 303.10 L659.60 302.28 L660.20 299.47 L660.80 302.45 L661.40 300.13 L662.00 303.27 L662.60 303.41 L663.20 302.58 L663.80 302.78 L664.40 303.74 L665.00 303.54 L665.60 302.25 L666.20 303.14 L666.80 302.52 L667.40 302.78 L668.00 302.86 L668.60 303.19 L669.20 302.72 L669.80 302.39 L670.40 302.22 L671.00 303.66 L671.60 303.17 L672.20 303.11 L672.80 302.42 L673.40 302.99 L674.00 302.90 L674.60 303.25 L675.20 302.53 L675.80 303.09 L676.40 302.95 L677.00 303.23 L677.60 302.77 L678.20 303.11 L678.80 302.54 L679.40 301.06 L680.00 302.57 L680.60 302.91 L681.20 302.42 L681.80 299.32 L682.40 302.77 L683.00 303.50 L683.60 302.47 L684.20 302.81 L684.80 303.17 L685.40 301.19 L686.00 303.37 L686.60 302.26 L687.20 303.76 L687.80 302.21 L688.40 303.88 L689.00 303.39 L689.60 303.24 L690.20 301.64 L690.80 303.81 L691.40 302.52 L692.00 303.33 L692.60 302.93 L693.20 303.47 L693.80 303.41 L694.40 302.98 L695.00 302.94 L695.60 302.94 L696.20 300.87 L696.80 303.58 L697.40 303.70 L698.00 302.23 L698.60 302.79 L699.20 303.09 L699.80 303.24 L700.40 302.55 L701.00 302.81 L701.60 303.55 L702.20 302.51 L702.80 302.98 L703.40 303.87 L704.00 303.08 L704.60 302.61 L705.20 303.84 L705.80 302.58 L706.40 303.21 L707.00 303.31 L707.60 303.51 L708.20 303.58 L708.80 302.41 L709.40 302.33 L710.00 303.89 L710.60 302.53 L711.20 303.63 L711.80 302.65 L712.40 302.34 L713.00 301.45 L713.60 303.19 L714.20 303.75 L714.80 303.31 L715.40 303.47 L716.00 286.50 L716.60 286.50 L717.20 303.36 L717.80 302.72 L718.40 302.76 L719.00 302.17" fill="none" stroke="#1f7a1f" stroke-width="1.0" stroke-linejoin="round"/>
<path d="M90.34 316.50h1.6M98.38 316.50h1.6M106.42 316.50h1.6M114.46 316.50h1.6M122.50 316.50h1.6M130.54 316.50h1.6M138.58 316.50h1.6M146.62 316.50h1.6M154.66 316.50h1.6M162.70 316.50h1.6M170.74 316.50h1.6M178.78 316.50h1.6M186.82 316.50h1.6M194.86 316.50h1.6M202.90 316.50h1.6M210.94 316.50h1.6M218.98 316.50h1.6M227.02 316.50h1.6M235.06 316.50h1.6M243.10 316.50h1.6M251.14 316.50h1.6M259.18 316.50h1.6M267.22 316.50h1.6M275.26 316.50h1.6M283.30 316.50h1.6M291.34 316.50h1.6M299.38 316.50h1.6M307.42 316.50h1.6M315.46 316.50h1.6M323.50 316.50h1.6M331.54 316.50h1.6M339.58 316.50h1.6M347.62 316.50h1.6M355.66 316.50h1.6M363.70 316.50h1.6M371.74 316.50h1.6M379.78 316.50h1.6M387.82 316.50h1.6M395.86 316.50h1.6M403.90 316.50h1.6M411.94 316.50h1.6M419.98 316.50h1.6M428.02 316.50h1.6M436.06 316.50h1.6M444.10 316.50h1.6M452.14 316.50h1.6M460.18 316.50h1.6M468.22 316.50h1.6M476.26 316.50h1.6M484.30 316.50h1.6M492.34 316.50h1.6M500.38 316.50h1.6M508.42 316.50h1.6M516.46 316.50h1.6M524.50 316.50h1.6M532.54 316.50h1.6M540.58 316.50h1.6M548.62 316.50h1.6M556.66 316.50h1.6M564.70 316.50h1.6M572.74 316.50h1.6M580.78 316.50h1.6M588.82 316.50h1.6M596.86 316.50h1.6M604.90 316.50h1.6M612.94 316.50h1.6M620.98 316.50h1.6M629.02 316.50h1.6M637.06 316.50h1.6M645.10 316.50h1.6M653.14 316.50h1.6M661.18 316.50h1.6M669.22 316.50h1.6M677.26 316.50h1.6M685.30 316.50h1.6M693.34 316.50h1.6M701.38 316.50h1.6M709.42 316.50h1.6M717.46 316.50h1.6" stroke="#777" stroke-width="1.0" fill="none"/>
<path d="M90.34 335.40h1.6M98.38 335.40h1.6M106.42 335.40h1.6M114.46 335.40h1.6M122.50 335.40h1.6M130.54 335.40h1.6M138.58 335.40h1.6M146.62 335.40h1.6M154.66 335.40h1.6M162.70 335.40h1.6M170.74 335.40h1.6M178.78 335.40h1.6M186.82 335.40h1.6M194.86 335.40h1.6M202.90 335.40h1.6M210.94 335.40h1.6M218.98 335.40h1.6M227.02 335.40h1.6M235.06 335.40h1.6M243.10 335.40h1.6M251.14 335.40h1.6M259.18 335.40h1.6M267.22 335.40h1.6M275.26 335.40h1.6M283.30 335.40h1.6M291.34 335.40h1.6M299.38 335.40h1.6M307.42 335.40h1.6M315.46 335.40h1.6M323.50 335.40h1.6M331.54 335.40h1.6M339.58 335.40h1.6M347.62 335.40h1.6M355.66 335.40h1.6M363.70 335.40h1.6M371.74 335.40h1.6M379.78 335.40h1.6M387.82 335.40h1.6M395.86 335.40h1.6M403.90 335.40h1.6M411.94 335.40h1.6M419.98 335.40h1.6M428.02 335.40h1.6M436.06 335.40h1.6M444.10 335.40h1.6M452.14 335.40h1.6M460.18 335.40h1.6M468.22 335.40h1.6M476.26 335.40h1.6M484.30 335.40h1.6M492.34 335.40h1.6M500.38 335.40h1.6M508.42 335.40h1.6M516.46 335.40h1.6M524.50 335.40h1.6M532.54 335.40h1.6M540.58 335.40h1.6M548.62 335.40h1.6M556.66 335.40h1.6M564.70 335.40h1.6M572.74 335.40h1.6M580.78 335.40h1.6M588.82 335.40h1.6M596.86 335.40h1.6M604.90 335.40h1.6M612.94 335.40h1.6M620.98 335.40h1.6M629.02 335.40h1.6M637.06 335.40h1.6M645.10 335.40h1.6M653.14 335.40h1.6M661.18 335.40h1.6M669.22 335.40h1.6M677.26 335.40h1.6M685.30 335.40h1.6M693.34 335.40h1.6M701.38 335.40h1.6M709.42 335.40h1.6M717.46 335.40h1.6" stroke="#777" stroke-width="1.0" fill="none"/>
<path d="M90.34 344.40h1.6M98.38 344.40h1.6M106.42 344.40h1.6M114.46 344.40h1.6M122.50 344.40h1.6M130.54 344.40h1.6M138.58 344.40h1.6M146.62 344.40h1.6M154.66 344.40h1.6M162.70 344.40h1.6M170.74 344.40h1.6M178.78 344.40h1.6M186.82 344.40h1.6M194.86 344.40h1.6M202.90 344.40h1.6M210.94 344.40h1.6M218.98 344.40h1.6M227.02 344.40h1.6M235.06 344.40h1.6M243.10 344.40h1.6M251.14 344.40h1.6M259.18 344.40h1.6M267.22 344.40h1.6M275.26 344.40h1.6M283.30 344.40h1.6M291.34 344.40h1.6M299.38 344.40h1.6M307.42 344.40h1.6M315.46 344.40h1.6M323.50 344.40h1.6M331.54 344.40h1.6M339.58 344.40h1.6M347.62 344.40h1.6M355.66 344.40h1.6M363.70 344.40h1.6M371.74 344.40h1.6M379.78 344.40h1.6M387.82 344.40h1.6M395.86 344.40h1.6M403.90 344.40h1.6M411.94 344.40h1.6M419.98 344.40h1.6M428.02 344.40h1.6M436.06 344.40h1.6M444.10 344.40h1.6M452.14 344.40h1.6M460.18 344.40h1.6M468.22 344.40h1.6M476.26 344.40h1.6M484.30 344.40h1.6M492.34 344.40h1.6M500.38 344.40h1.6M508.42 344.40h1.6M516.46 344.40h1.6M524.50 344.40h1.6M532.54 344.40h1.6M540.58 344.40h1.6M548.62 344.40h1.6M556.66 344.40h1.6M564.70 344.40h1.6M572.74 344.40h1.6M580.78 344.40h1.6M588.82 344.40h1.6M596.86 344.40h1.6M604.90 344.40h1.6M612.94 344.40h1.6M620.98 344.40h1.6M629.02 344.40h1.6M637.06 344.40h1.6M645.10 344.40h1.6M653.14 344.40h1.6M661.18 344.40h1.6M669.22 344.40h1.6M677.26 344.40h1.6M685.30 344.40h1.6M693.34 344.40h1.6M701.38 344.40h1.6M709.42 344.40h1.6M717.46 344.40h1.6" stroke="#777" stroke-width="1.0" fill="none"/>
<path d="M90.34 354.20h1.6M98.38 354.20h1.6M106.42 354.20h1.6M114.46 354.20h1.6M122.50 354.20h1.6M130.54 354.20h1.6M138.58 354.20h1.6M146.62 354.20h1.6M154.66 354.20h1.6M162.70 354.20h1.6M170.74 354.20h1.6M178.78 354.20h1.6M186.82 354.20h1.6M194.86 354.20h1.6M202.90 354.20h1.6M210.94 354.20h1.6M218.98 354.20h1.6M227.02 354.20h1.6M235.06 354.20h1.6M243.10 354.20h1.6M251.14 354.20h1.6M259.18 354.20h1.6M267.22 354.20h1.6M275.26 354.20h1.6M283.30 354.20h1.6M291.34 354.20h1.6M299.38 354.20h1.6M307.42 354.20h1.6M315.46 354.20h1.6M323.50 354.20h1.6M331.54 354.20h1.6M339.58 354.20h1.6M347.62 354.20h1.6M355.66 354.20h1.6M363.70 354.20h1.6M371.74 354.20h1.6M379.78 354.20h1.6M387.82 354.20h1.6M395.86 354.20h1.6M403.90 354.20h1.6M411.94 354.20h1.6M419.98 354.20h1.6M428.02 354.20h1.6M436.06 354.20h1.6M444.10 354.20h1.6M452.14 354.20h1.6M460.18 354.20h1.6M468.22 354.20h1.6M476.26 354.20h1.6M484.30 354.20h1.6M492.34 354.20h1.6M500.38 354.20h1.6M508.42 354.20h1.6M516.46 354.20h1.6M524.50 354.20h1.6M532.54 354.20h1.6M540.58 354.20h1.6M548.62 354.20h1.6M556.66 354.20h1.6M564.70 354.20h1.6M572.74 354.20h1.6M580.78 354.20h1.6M588.82 354.20h1.6M596.86 354.20h1.6M604.90 354.20h1.6M612.94 354.20h1.6M620.98 354.20h1.6M629.02 354.20h1.6M637.06 354.20h1.6M645.10 354.20h1.6M653.14 354.20h1.6M661.18 354.20h1.6M669.22 354.20h1.6M677.26 354.20h1.6M685.30 354.20h1.6M693.34 354.20h1.6M701.38 354.20h1.6M709.42 354.20h1.6M717.46 354.20h1.6" stroke="#777" stroke-width="1.0" fill="none"/>
<line x1="79.50" y1="316.50" x2="82.50" y2="316.50" stroke="#333" stroke-width="1"/>
<line x1="79.50" y1="325.70" x2="82.50" y2="325.70" stroke="#333" stroke-width="1"/>
<line x1="79.50" y1="335.40" x2="82.50" y2="335.40" stroke="#333" stroke-width="1"/>
<line x1="79.50" y1="344.40" x2="82.50" y2="344.40" stroke="#333" stroke-width="1"/>
<line x1="79.50" y1="354.20" x2="82.50" y2="354.20" stroke="#333" stroke-width="1"/>
<path d="M82.5 325.7H86.3V335.4H645.3V316.6H715.3V335.4H720" fill="none" stroke="#000" stroke-width="1.7"/>
<path d="M90.34 367.30h1.6M98.38 367.30h1.6M106.42 367.30h1.6M114.46 367.30h1.6M122.50 367.30h1.6M130.54 367.30h1.6M138.58 367.30h1.6M146.62 367.30h1.6M154.66 367.30h1.6M162.70 367.30h1.6M170.74 367.30h1.6M178.78 367.30h1.6M186.82 367.30h1.6M194.86 367.30h1.6M202.90 367.30h1.6M210.94 367.30h1.6M218.98 367.30h1.6M227.02 367.30h1.6M235.06 367.30h1.6M243.10 367.30h1.6M251.14 367.30h1.6M259.18 367.30h1.6M267.22 367.30h1.6M275.26 367.30h1.6M283.30 367.30h1.6M291.34 367.30h1.6M299.38 367.30h1.6M307.42 367.30h1.6M315.46 367.30h1.6M323.50 367.30h1.6M331.54 367.30h1.6M339.58 367.30h1.6M347.62 367.30h1.6M355.66 367.30h1.6M363.70 367.30h1.6M371.74 367.30h1.6M379.78 367.30h1.6M387.82 367.30h1.6M395.86 367.30h1.6M403.90 367.30h1.6M411.94 367.30h1.6M419.98 367.30h1.6M428.02 367.30h1.6M436.06 367.30h1.6M444.10 367.30h1.6M452.14 367.30h1.6M460.18 367.30h1.6M468.22 367.30h1.6M476.26 367.30h1.6M484.30 367.30h1.6M492.34 367.30h1.6M500.38 367.30h1.6M508.42 367.30h1.6M516.46 367.30h1.6M524.50 367.30h1.6M532.54 367.30h1.6M540.58 367.30h1.6M548.62 367.30h1.6M556.66 367.30h1.6M564.70 367.30h1.6M572.74 367.30h1.6M580.78 367.30h1.6M588.82 367.30h1.6M596.86 367.30h1.6M604.90 367.30h1.6M612.94 367.30h1.6M620.98 367.30h1.6M629.02 367.30h1.6M637.06 367.30h1.6M645.10 367.30h1.6M653.14 367.30h1.6M661.18 367.30h1.6M669.22 367.30h1.6M677.26 367.30h1.6M685.30 367.30h1.6M693.34 367.30h1.6M701.38 367.30h1.6M709.42 367.30h1.6M717.46 367.30h1.6" stroke="#777" stroke-width="1.0" fill="none"/>
<line x1="79.50" y1="367.30" x2="82.50" y2="367.30" stroke="#333" stroke-width="1"/>
<path d="M90.34 376.90h1.6M98.38 376.90h1.6M106.42 376.90h1.6M114.46 376.90h1.6M122.50 376.90h1.6M130.54 376.90h1.6M138.58 376.90h1.6M146.62 376.90h1.6M154.66 376.90h1.6M162.70 376.90h1.6M170.74 376.90h1.6M178.78 376.90h1.6M186.82 376.90h1.6M194.86 376.90h1.6M202.90 376.90h1.6M210.94 376.90h1.6M218.98 376.90h1.6M227.02 376.90h1.6M235.06 376.90h1.6M243.10 376.90h1.6M251.14 376.90h1.6M259.18 376.90h1.6M267.22 376.90h1.6M275.26 376.90h1.6M283.30 376.90h1.6M291.34 376.90h1.6M299.38 376.90h1.6M307.42 376.90h1.6M315.46 376.90h1.6M323.50 376.90h1.6M331.54 376.90h1.6M339.58 376.90h1.6M347.62 376.90h1.6M355.66 376.90h1.6M363.70 376.90h1.6M371.74 376.90h1.6M379.78 376.90h1.6M387.82 376.90h1.6M395.86 376.90h1.6M403.90 376.90h1.6M411.94 376.90h1.6M419.98 376.90h1.6M428.02 376.90h1.6M436.06 376.90h1.6M444.10 376.90h1.6M452.14 376.90h1.6M460.18 376.90h1.6M468.22 376.90h1.6M476.26 376.90h1.6M484.30 376.90h1.6M492.34 376.90h1.6M500.38 376.90h1.6M508.42 376.90h1.6M516.46 376.90h1.6M524.50 376.90h1.6M532.54 376.90h1.6M540.58 376.90h1.6M548.62 376.90h1.6M556.66 376.90h1.6M564.70 376.90h1.6M572.74 376.90h1.6M580.78 376.90h1.6M588.82 376.90h1.6M596.86 376.90h1.6M604.90 376.90h1.6M612.94 376.90h1.6M620.98 376.90h1.6M629.02 376.90h1.6M637.06 376.90h1.6M645.10 376.90h1.6M653.14 376.90h1.6M661.18 376.90h1.6M669.22 376.90h1.6M677.26 376.90h1.6M685.30 376.90h1.6M693.34 376.90h1.6M701.38 376.90h1.6M709.42 376.90h1.6M717.46 376.90h1.6" stroke="#777" stroke-width="1.0" fill="none"/>
<line x1="79.50" y1="376.90" x2="82.50" y2="376.90" stroke="#333" stroke-width="1"/>
<path d="M90.34 387.30h1.6M98.38 387.30h1.6M106.42 387.30h1.6M114.46 387.30h1.6M122.50 387.30h1.6M130.54 387.30h1.6M138.58 387.30h1.6M146.62 387.30h1.6M154.66 387.30h1.6M162.70 387.30h1.6M170.74 387.30h1.6M178.78 387.30h1.6M186.82 387.30h1.6M194.86 387.30h1.6M202.90 387.30h1.6M210.94 387.30h1.6M218.98 387.30h1.6M227.02 387.30h1.6M235.06 387.30h1.6M243.10 387.30h1.6M251.14 387.30h1.6M259.18 387.30h1.6M267.22 387.30h1.6M275.26 387.30h1.6M283.30 387.30h1.6M291.34 387.30h1.6M299.38 387.30h1.6M307.42 387.30h1.6M315.46 387.30h1.6M323.50 387.30h1.6M331.54 387.30h1.6M339.58 387.30h1.6M347.62 387.30h1.6M355.66 387.30h1.6M363.70 387.30h1.6M371.74 387.30h1.6M379.78 387.30h1.6M387.82 387.30h1.6M395.86 387.30h1.6M403.90 387.30h1.6M411.94 387.30h1.6M419.98 387.30h1.6M428.02 387.30h1.6M436.06 387.30h1.6M444.10 387.30h1.6M452.14 387.30h1.6M460.18 387.30h1.6M468.22 387.30h1.6M476.26 387.30h1.6M484.30 387.30h1.6M492.34 387.30h1.6M500.38 387.30h1.6M508.42 387.30h1.6M516.46 387.30h1.6M524.50 387.30h1.6M532.54 387.30h1.6M540.58 387.30h1.6M548.62 387.30h1.6M556.66 387.30h1.6M564.70 387.30h1.6M572.74 387.30h1.6M580.78 387.30h1.6M588.82 387.30h1.6M596.86 387.30h1.6M604.90 387.30h1.6M612.94 387.30h1.6M620.98 387.30h1.6M629.02 387.30h1.6M637.06 387.30h1.6M645.10 387.30h1.6M653.14 387.30h1.6M661.18 387.30h1.6M669.22 387.30h1.6M677.26 387.30h1.6M685.30 387.30h1.6M693.34 387.30h1.6M701.38 387.30h1.6M709.42 387.30h1.6M717.46 387.30h1.6" stroke="#777" stroke-width="1.0" fill="none"/>
<line x1="79.50" y1="387.30" x2="82.50" y2="387.30" stroke="#333" stroke-width="1"/>
<line x1="82.50" y1="397.50" x2="720.00" y2="397.50" stroke="#333" stroke-width="1.1"/>
<rect x="49.70" y="357.00" width="48.30" height="5.00" fill="#ffffff"/>
<line x1="49.70" y1="357.30" x2="98.00" y2="357.30" stroke="#222" stroke-width="0.8"/>
<line x1="49.70" y1="361.70" x2="98.00" y2="361.70" stroke="#222" stroke-width="0.8"/>
<line x1="52.00" y1="359.50" x2="58.00" y2="359.50" stroke="#222" stroke-width="0.8"/>
<line x1="74.00" y1="359.50" x2="80.00" y2="359.50" stroke="#222" stroke-width="0.8"/>
<text x="66.00" y="361.20" font-family="Liberation Sans" font-size="3.6" fill="#333" text-anchor="middle" font-weight="normal">CPAP</text>
<text x="90.00" y="361.20" font-family="Liberation Sans" font-size="3.6" fill="#111" text-anchor="middle" font-weight="bold">BiLevel</text>
<path d="M90.34 401.70h1.6M98.38 401.70h1.6M106.42 401.70h1.6M114.46 401.70h1.6M122.50 401.70h1.6M130.54 401.70h1.6M138.58 401.70h1.6M146.62 401.70h1.6M154.66 401.70h1.6M162.70 401.70h1.6M170.74 401.70h1.6M178.78 401.70h1.6M186.82 401.70h1.6M194.86 401.70h1.6M202.90 401.70h1.6M210.94 401.70h1.6M218.98 401.70h1.6M227.02 401.70h1.6M235.06 401.70h1.6M243.10 401.70h1.6M251.14 401.70h1.6M259.18 401.70h1.6M267.22 401.70h1.6M275.26 401.70h1.6M283.30 401.70h1.6M291.34 401.70h1.6M299.38 401.70h1.6M307.42 401.70h1.6M315.46 401.70h1.6M323.50 401.70h1.6M331.54 401.70h1.6M339.58 401.70h1.6M347.62 401.70h1.6M355.66 401.70h1.6M363.70 401.70h1.6M371.74 401.70h1.6M379.78 401.70h1.6M387.82 401.70h1.6M395.86 401.70h1.6M403.90 401.70h1.6M411.94 401.70h1.6M419.98 401.70h1.6M428.02 401.70h1.6M436.06 401.70h1.6M444.10 401.70h1.6M452.14 401.70h1.6M460.18 401.70h1.6M468.22 401.70h1.6M476.26 401.70h1.6M484.30 401.70h1.6M492.34 401.70h1.6M500.38 401.70h1.6M508.42 401.70h1.6M516.46 401.70h1.6M524.50 401.70h1.6M532.54 401.70h1.6M540.58 401.70h1.6M548.62 401.70h1.6M556.66 401.70h1.6M564.70 401.70h1.6M572.74 401.70h1.6M580.78 401.70h1.6M588.82 401.70h1.6M596.86 401.70h1.6M604.90 401.70h1.6M612.94 401.70h1.6M620.98 401.70h1.6M629.02 401.70h1.6M637.06 401.70h1.6M645.10 401.70h1.6M653.14 401.70h1.6M661.18 401.70h1.6M669.22 401.70h1.6M677.26 401.70h1.6M685.30 401.70h1.6M693.34 401.70h1.6M701.38 401.70h1.6M709.42 401.70h1.6M717.46 401.70h1.6" stroke="#666" stroke-width="0.9" fill="none"/>
<line x1="79.50" y1="401.70" x2="82.50" y2="401.70" stroke="#333" stroke-width="1"/>
<path d="M90.34 403.80h1.6M98.38 403.80h1.6M106.42 403.80h1.6M114.46 403.80h1.6M122.50 403.80h1.6M130.54 403.80h1.6M138.58 403.80h1.6M146.62 403.80h1.6M154.66 403.80h1.6M162.70 403.80h1.6M170.74 403.80h1.6M178.78 403.80h1.6M186.82 403.80h1.6M194.86 403.80h1.6M202.90 403.80h1.6M210.94 403.80h1.6M218.98 403.80h1.6M227.02 403.80h1.6M235.06 403.80h1.6M243.10 403.80h1.6M251.14 403.80h1.6M259.18 403.80h1.6M267.22 403.80h1.6M275.26 403.80h1.6M283.30 403.80h1.6M291.34 403.80h1.6M299.38 403.80h1.6M307.42 403.80h1.6M315.46 403.80h1.6M323.50 403.80h1.6M331.54 403.80h1.6M339.58 403.80h1.6M347.62 403.80h1.6M355.66 403.80h1.6M363.70 403.80h1.6M371.74 403.80h1.6M379.78 403.80h1.6M387.82 403.80h1.6M395.86 403.80h1.6M403.90 403.80h1.6M411.94 403.80h1.6M419.98 403.80h1.6M428.02 403.80h1.6M436.06 403.80h1.6M444.10 403.80h1.6M452.14 403.80h1.6M460.18 403.80h1.6M468.22 403.80h1.6M476.26 403.80h1.6M484.30 403.80h1.6M492.34 403.80h1.6M500.38 403.80h1.6M508.42 403.80h1.6M516.46 403.80h1.6M524.50 403.80h1.6M532.54 403.80h1.6M540.58 403.80h1.6M548.62 403.80h1.6M556.66 403.80h1.6M564.70 403.80h1.6M572.74 403.80h1.6M580.78 403.80h1.6M588.82 403.80h1.6M596.86 403.80h1.6M604.90 403.80h1.6M612.94 403.80h1.6M620.98 403.80h1.6M629.02 403.80h1.6M637.06 403.80h1.6M645.10 403.80h1.6M653.14 403.80h1.6M661.18 403.80h1.6M669.22 403.80h1.6M677.26 403.80h1.6M685.30 403.80h1.6M693.34 403.80h1.6M701.38 403.80h1.6M709.42 403.80h1.6M717.46 403.80h1.6" stroke="#666" stroke-width="0.9" fill="none"/>
<line x1="79.50" y1="403.80" x2="82.50" y2="403.80" stroke="#333" stroke-width="1"/>
<path d="M90.34 410.60h1.6M98.38 410.60h1.6M106.42 410.60h1.6M114.46 410.60h1.6M122.50 410.60h1.6M130.54 410.60h1.6M138.58 410.60h1.6M146.62 410.60h1.6M154.66 410.60h1.6M162.70 410.60h1.6M170.74 410.60h1.6M178.78 410.60h1.6M186.82 410.60h1.6M194.86 410.60h1.6M202.90 410.60h1.6M210.94 410.60h1.6M218.98 410.60h1.6M227.02 410.60h1.6M235.06 410.60h1.6M243.10 410.60h1.6M251.14 410.60h1.6M259.18 410.60h1.6M267.22 410.60h1.6M275.26 410.60h1.6M283.30 410.60h1.6M291.34 410.60h1.6M299.38 410.60h1.6M307.42 410.60h1.6M315.46 410.60h1.6M323.50 410.60h1.6M331.54 410.60h1.6M339.58 410.60h1.6M347.62 410.60h1.6M355.66 410.60h1.6M363.70 410.60h1.6M371.74 410.60h1.6M379.78 410.60h1.6M387.82 410.60h1.6M395.86 410.60h1.6M403.90 410.60h1.6M411.94 410.60h1.6M419.98 410.60h1.6M428.02 410.60h1.6M436.06 410.60h1.6M444.10 410.60h1.6M452.14 410.60h1.6M460.18 410.60h1.6M468.22 410.60h1.6M476.26 410.60h1.6M484.30 410.60h1.6M492.34 410.60h1.6M500.38 410.60h1.6M508.42 410.60h1.6M516.46 410.60h1.6M524.50 410.60h1.6M532.54 410.60h1.6M540.58 410.60h1.6M548.62 410.60h1.6M556.66 410.60h1.6M564.70 410.60h1.6M572.74 410.60h1.6M580.78 410.60h1.6M588.82 410.60h1.6M596.86 410.60h1.6M604.90 410.60h1.6M612.94 410.60h1.6M620.98 410.60h1.6M629.02 410.60h1.6M637.06 410.60h1.6M645.10 410.60h1.6M653.14 410.60h1.6M661.18 410.60h1.6M669.22 410.60h1.6M677.26 410.60h1.6M685.30 410.60h1.6M693.34 410.60h1.6M701.38 410.60h1.6M709.42 410.60h1.6M717.46 410.60h1.6" stroke="#666" stroke-width="0.9" fill="none"/>
<line x1="79.50" y1="410.60" x2="82.50" y2="410.60" stroke="#333" stroke-width="1"/>
<path d="M90.34 415.00h1.6M98.38 415.00h1.6M106.42 415.00h1.6M114.46 415.00h1.6M122.50 415.00h1.6M130.54 415.00h1.6M138.58 415.00h1.6M146.62 415.00h1.6M154.66 415.00h1.6M162.70 415.00h1.6M170.74 415.00h1.6M178.78 415.00h1.6M186.82 415.00h1.6M194.86 415.00h1.6M202.90 415.00h1.6M210.94 415.00h1.6M218.98 415.00h1.6M227.02 415.00h1.6M235.06 415.00h1.6M243.10 415.00h1.6M251.14 415.00h1.6M259.18 415.00h1.6M267.22 415.00h1.6M275.26 415.00h1.6M283.30 415.00h1.6M291.34 415.00h1.6M299.38 415.00h1.6M307.42 415.00h1.6M315.46 415.00h1.6M323.50 415.00h1.6M331.54 415.00h1.6M339.58 415.00h1.6M347.62 415.00h1.6M355.66 415.00h1.6M363.70 415.00h1.6M371.74 415.00h1.6M379.78 415.00h1.6M387.82 415.00h1.6M395.86 415.00h1.6M403.90 415.00h1.6M411.94 415.00h1.6M419.98 415.00h1.6M428.02 415.00h1.6M436.06 415.00h1.6M444.10 415.00h1.6M452.14 415.00h1.6M460.18 415.00h1.6M468.22 415.00h1.6M476.26 415.00h1.6M484.30 415.00h1.6M492.34 415.00h1.6M500.38 415.00h1.6M508.42 415.00h1.6M516.46 415.00h1.6M524.50 415.00h1.6M532.54 415.00h1.6M540.58 415.00h1.6M548.62 415.00h1.6M556.66 415.00h1.6M564.70 415.00h1.6M572.74 415.00h1.6M580.78 415.00h1.6M588.82 415.00h1.6M596.86 415.00h1.6M604.90 415.00h1.6M612.94 415.00h1.6M620.98 415.00h1.6M629.02 415.00h1.6M637.06 415.00h1.6M645.10 415.00h1.6M653.14 415.00h1.6M661.18 415.00h1.6M669.22 415.00h1.6M677.26 415.00h1.6M685.30 415.00h1.6M693.34 415.00h1.6M701.38 415.00h1.6M709.42 415.00h1.6M717.46 415.00h1.6" stroke="#666" stroke-width="0.9" fill="none"/>
<line x1="79.50" y1="415.00" x2="82.50" y2="415.00" stroke="#333" stroke-width="1"/>
<path d="M90.34 420.60h1.6M98.38 420.60h1.6M106.42 420.60h1.6M114.46 420.60h1.6M122.50 420.60h1.6M130.54 420.60h1.6M138.58 420.60h1.6M146.62 420.60h1.6M154.66 420.60h1.6M162.70 420.60h1.6M170.74 420.60h1.6M178.78 420.60h1.6M186.82 420.60h1.6M194.86 420.60h1.6M202.90 420.60h1.6M210.94 420.60h1.6M218.98 420.60h1.6M227.02 420.60h1.6M235.06 420.60h1.6M243.10 420.60h1.6M251.14 420.60h1.6M259.18 420.60h1.6M267.22 420.60h1.6M275.26 420.60h1.6M283.30 420.60h1.6M291.34 420.60h1.6M299.38 420.60h1.6M307.42 420.60h1.6M315.46 420.60h1.6M323.50 420.60h1.6M331.54 420.60h1.6M339.58 420.60h1.6M347.62 420.60h1.6M355.66 420.60h1.6M363.70 420.60h1.6M371.74 420.60h1.6M379.78 420.60h1.6M387.82 420.60h1.6M395.86 420.60h1.6M403.90 420.60h1.6M411.94 420.60h1.6M419.98 420.60h1.6M428.02 420.60h1.6M436.06 420.60h1.6M444.10 420.60h1.6M452.14 420.60h1.6M460.18 420.60h1.6M468.22 420.60h1.6M476.26 420.60h1.6M484.30 420.60h1.6M492.34 420.60h1.6M500.38 420.60h1.6M508.42 420.60h1.6M516.46 420.60h1.6M524.50 420.60h1.6M532.54 420.60h1.6M540.58 420.60h1.6M548.62 420.60h1.6M556.66 420.60h1.6M564.70 420.60h1.6M572.74 420.60h1.6M580.78 420.60h1.6M588.82 420.60h1.6M596.86 420.60h1.6M604.90 420.60h1.6M612.94 420.60h1.6M620.98 420.60h1.6M629.02 420.60h1.6M637.06 420.60h1.6M645.10 420.60h1.6M653.14 420.60h1.6M661.18 420.60h1.6M669.22 420.60h1.6M677.26 420.60h1.6M685.30 420.60h1.6M693.34 420.60h1.6M701.38 420.60h1.6M709.42 420.60h1.6M717.46 420.60h1.6" stroke="#666" stroke-width="0.9" fill="none"/>
<line x1="79.50" y1="420.60" x2="82.50" y2="420.60" stroke="#333" stroke-width="1"/>
<path d="M90.34 422.80h1.6M98.38 422.80h1.6M106.42 422.80h1.6M114.46 422.80h1.6M122.50 422.80h1.6M130.54 422.80h1.6M138.58 422.80h1.6M146.62 422.80h1.6M154.66 422.80h1.6M162.70 422.80h1.6M170.74 422.80h1.6M178.78 422.80h1.6M186.82 422.80h1.6M194.86 422.80h1.6M202.90 422.80h1.6M210.94 422.80h1.6M218.98 422.80h1.6M227.02 422.80h1.6M235.06 422.80h1.6M243.10 422.80h1.6M251.14 422.80h1.6M259.18 422.80h1.6M267.22 422.80h1.6M275.26 422.80h1.6M283.30 422.80h1.6M291.34 422.80h1.6M299.38 422.80h1.6M307.42 422.80h1.6M315.46 422.80h1.6M323.50 422.80h1.6M331.54 422.80h1.6M339.58 422.80h1.6M347.62 422.80h1.6M355.66 422.80h1.6M363.70 422.80h1.6M371.74 422.80h1.6M379.78 422.80h1.6M387.82 422.80h1.6M395.86 422.80h1.6M403.90 422.80h1.6M411.94 422.80h1.6M419.98 422.80h1.6M428.02 422.80h1.6M436.06 422.80h1.6M444.10 422.80h1.6M452.14 422.80h1.6M460.18 422.80h1.6M468.22 422.80h1.6M476.26 422.80h1.6M484.30 422.80h1.6M492.34 422.80h1.6M500.38 422.80h1.6M508.42 422.80h1.6M516.46 422.80h1.6M524.50 422.80h1.6M532.54 422.80h1.6M540.58 422.80h1.6M548.62 422.80h1.6M556.66 422.80h1.6M564.70 422.80h1.6M572.74 422.80h1.6M580.78 422.80h1.6M588.82 422.80h1.6M596.86 422.80h1.6M604.90 422.80h1.6M612.94 422.80h1.6M620.98 422.80h1.6M629.02 422.80h1.6M637.06 422.80h1.6M645.10 422.80h1.6M653.14 422.80h1.6M661.18 422.80h1.6M669.22 422.80h1.6M677.26 422.80h1.6M685.30 422.80h1.6M693.34 422.80h1.6M701.38 422.80h1.6M709.42 422.80h1.6M717.46 422.80h1.6" stroke="#666" stroke-width="0.9" fill="none"/>
<line x1="79.50" y1="422.80" x2="82.50" y2="422.80" stroke="#333" stroke-width="1"/>
<path d="M90.34 425.00h1.6M98.38 425.00h1.6M106.42 425.00h1.6M114.46 425.00h1.6M122.50 425.00h1.6M130.54 425.00h1.6M138.58 425.00h1.6M146.62 425.00h1.6M154.66 425.00h1.6M162.70 425.00h1.6M170.74 425.00h1.6M178.78 425.00h1.6M186.82 425.00h1.6M194.86 425.00h1.6M202.90 425.00h1.6M210.94 425.00h1.6M218.98 425.00h1.6M227.02 425.00h1.6M235.06 425.00h1.6M243.10 425.00h1.6M251.14 425.00h1.6M259.18 425.00h1.6M267.22 425.00h1.6M275.26 425.00h1.6M283.30 425.00h1.6M291.34 425.00h1.6M299.38 425.00h1.6M307.42 425.00h1.6M315.46 425.00h1.6M323.50 425.00h1.6M331.54 425.00h1.6M339.58 425.00h1.6M347.62 425.00h1.6M355.66 425.00h1.6M363.70 425.00h1.6M371.74 425.00h1.6M379.78 425.00h1.6M387.82 425.00h1.6M395.86 425.00h1.6M403.90 425.00h1.6M411.94 425.00h1.6M419.98 425.00h1.6M428.02 425.00h1.6M436.06 425.00h1.6M444.10 425.00h1.6M452.14 425.00h1.6M460.18 425.00h1.6M468.22 425.00h1.6M476.26 425.00h1.6M484.30 425.00h1.6M492.34 425.00h1.6M500.38 425.00h1.6M508.42 425.00h1.6M516.46 425.00h1.6M524.50 425.00h1.6M532.54 425.00h1.6M540.58 425.00h1.6M548.62 425.00h1.6M556.66 425.00h1.6M564.70 425.00h1.6M572.74 425.00h1.6M580.78 425.00h1.6M588.82 425.00h1.6M596.86 425.00h1.6M604.90 425.00h1.6M612.94 425.00h1.6M620.98 425.00h1.6M629.02 425.00h1.6M637.06 425.00h1.6M645.10 425.00h1.6M653.14 425.00h1.6M661.18 425.00h1.6M669.22 425.00h1.6M677.26 425.00h1.6M685.30 425.00h1.6M693.34 425.00h1.6M701.38 425.00h1.6M709.42 425.00h1.6M717.46 425.00h1.6" stroke="#666" stroke-width="0.9" fill="none"/>
<line x1="79.50" y1="425.00" x2="82.50" y2="425.00" stroke="#333" stroke-width="1"/>
<path d="M90.34 427.30h1.6M98.38 427.30h1.6M106.42 427.30h1.6M114.46 427.30h1.6M122.50 427.30h1.6M130.54 427.30h1.6M138.58 427.30h1.6M146.62 427.30h1.6M154.66 427.30h1.6M162.70 427.30h1.6M170.74 427.30h1.6M178.78 427.30h1.6M186.82 427.30h1.6M194.86 427.30h1.6M202.90 427.30h1.6M210.94 427.30h1.6M218.98 427.30h1.6M227.02 427.30h1.6M235.06 427.30h1.6M243.10 427.30h1.6M251.14 427.30h1.6M259.18 427.30h1.6M267.22 427.30h1.6M275.26 427.30h1.6M283.30 427.30h1.6M291.34 427.30h1.6M299.38 427.30h1.6M307.42 427.30h1.6M315.46 427.30h1.6M323.50 427.30h1.6M331.54 427.30h1.6M339.58 427.30h1.6M347.62 427.30h1.6M355.66 427.30h1.6M363.70 427.30h1.6M371.74 427.30h1.6M379.78 427.30h1.6M387.82 427.30h1.6M395.86 427.30h1.6M403.90 427.30h1.6M411.94 427.30h1.6M419.98 427.30h1.6M428.02 427.30h1.6M436.06 427.30h1.6M444.10 427.30h1.6M452.14 427.30h1.6M460.18 427.30h1.6M468.22 427.30h1.6M476.26 427.30h1.6M484.30 427.30h1.6M492.34 427.30h1.6M500.38 427.30h1.6M508.42 427.30h1.6M516.46 427.30h1.6M524.50 427.30h1.6M532.54 427.30h1.6M540.58 427.30h1.6M548.62 427.30h1.6M556.66 427.30h1.6M564.70 427.30h1.6M572.74 427.30h1.6M580.78 427.30h1.6M588.82 427.30h1.6M596.86 427.30h1.6M604.90 427.30h1.6M612.94 427.30h1.6M620.98 427.30h1.6M629.02 427.30h1.6M637.06 427.30h1.6M645.10 427.30h1.6M653.14 427.30h1.6M661.18 427.30h1.6M669.22 427.30h1.6M677.26 427.30h1.6M685.30 427.30h1.6M693.34 427.30h1.6M701.38 427.30h1.6M709.42 427.30h1.6M717.46 427.30h1.6" stroke="#666" stroke-width="0.9" fill="none"/>
<line x1="79.50" y1="427.30" x2="82.50" y2="427.30" stroke="#333" stroke-width="1"/>
<path d="M90.34 429.50h1.6M98.38 429.50h1.6M106.42 429.50h1.6M114.46 429.50h1.6M122.50 429.50h1.6M130.54 429.50h1.6M138.58 429.50h1.6M146.62 429.50h1.6M154.66 429.50h1.6M162.70 429.50h1.6M170.74 429.50h1.6M178.78 429.50h1.6M186.82 429.50h1.6M194.86 429.50h1.6M202.90 429.50h1.6M210.94 429.50h1.6M218.98 429.50h1.6M227.02 429.50h1.6M235.06 429.50h1.6M243.10 429.50h1.6M251.14 429.50h1.6M259.18 429.50h1.6M267.22 429.50h1.6M275.26 429.50h1.6M283.30 429.50h1.6M291.34 429.50h1.6M299.38 429.50h1.6M307.42 429.50h1.6M315.46 429.50h1.6M323.50 429.50h1.6M331.54 429.50h1.6M339.58 429.50h1.6M347.62 429.50h1.6M355.66 429.50h1.6M363.70 429.50h1.6M371.74 429.50h1.6M379.78 429.50h1.6M387.82 429.50h1.6M395.86 429.50h1.6M403.90 429.50h1.6M411.94 429.50h1.6M419.98 429.50h1.6M428.02 429.50h1.6M436.06 429.50h1.6M444.10 429.50h1.6M452.14 429.50h1.6M460.18 429.50h1.6M468.22 429.50h1.6M476.26 429.50h1.6M484.30 429.50h1.6M492.34 429.50h1.6M500.38 429.50h1.6M508.42 429.50h1.6M516.46 429.50h1.6M524.50 429.50h1.6M532.54 429.50h1.6M540.58 429.50h1.6M548.62 429.50h1.6M556.66 429.50h1.6M564.70 429.50h1.6M572.74 429.50h1.6M580.78 429.50h1.6M588.82 429.50h1.6M596.86 429.50h1.6M604.90 429.50h1.6M612.94 429.50h1.6M620.98 429.50h1.6M629.02 429.50h1.6M637.06 429.50h1.6M645.10 429.50h1.6M653.14 429.50h1.6M661.18 429.50h1.6M669.22 429.50h1.6M677.26 429.50h1.6M685.30 429.50h1.6M693.34 429.50h1.6M701.38 429.50h1.6M709.42 429.50h1.6M717.46 429.50h1.6" stroke="#666" stroke-width="0.9" fill="none"/>
<line x1="79.50" y1="429.50" x2="82.50" y2="429.50" stroke="#333" stroke-width="1"/>
<path d="M90.34 431.80h1.6M98.38 431.80h1.6M106.42 431.80h1.6M114.46 431.80h1.6M122.50 431.80h1.6M130.54 431.80h1.6M138.58 431.80h1.6M146.62 431.80h1.6M154.66 431.80h1.6M162.70 431.80h1.6M170.74 431.80h1.6M178.78 431.80h1.6M186.82 431.80h1.6M194.86 431.80h1.6M202.90 431.80h1.6M210.94 431.80h1.6M218.98 431.80h1.6M227.02 431.80h1.6M235.06 431.80h1.6M243.10 431.80h1.6M251.14 431.80h1.6M259.18 431.80h1.6M267.22 431.80h1.6M275.26 431.80h1.6M283.30 431.80h1.6M291.34 431.80h1.6M299.38 431.80h1.6M307.42 431.80h1.6M315.46 431.80h1.6M323.50 431.80h1.6M331.54 431.80h1.6M339.58 431.80h1.6M347.62 431.80h1.6M355.66 431.80h1.6M363.70 431.80h1.6M371.74 431.80h1.6M379.78 431.80h1.6M387.82 431.80h1.6M395.86 431.80h1.6M403.90 431.80h1.6M411.94 431.80h1.6M419.98 431.80h1.6M428.02 431.80h1.6M436.06 431.80h1.6M444.10 431.80h1.6M452.14 431.80h1.6M460.18 431.80h1.6M468.22 431.80h1.6M476.26 431.80h1.6M484.30 431.80h1.6M492.34 431.80h1.6M500.38 431.80h1.6M508.42 431.80h1.6M516.46 431.80h1.6M524.50 431.80h1.6M532.54 431.80h1.6M540.58 431.80h1.6M548.62 431.80h1.6M556.66 431.80h1.6M564.70 431.80h1.6M572.74 431.80h1.6M580.78 431.80h1.6M588.82 431.80h1.6M596.86 431.80h1.6M604.90 431.80h1.6M612.94 431.80h1.6M620.98 431.80h1.6M629.02 431.80h1.6M637.06 431.80h1.6M645.10 431.80h1.6M653.14 431.80h1.6M661.18 431.80h1.6M669.22 431.80h1.6M677.26 431.80h1.6M685.30 431.80h1.6M693.34 431.80h1.6M701.38 431.80h1.6M709.42 431.80h1.6M717.46 431.80h1.6" stroke="#666" stroke-width="0.9" fill="none"/>
<line x1="79.50" y1="431.80" x2="82.50" y2="431.80" stroke="#333" stroke-width="1"/>
<path d="M90.34 434.00h1.6M98.38 434.00h1.6M106.42 434.00h1.6M114.46 434.00h1.6M122.50 434.00h1.6M130.54 434.00h1.6M138.58 434.00h1.6M146.62 434.00h1.6M154.66 434.00h1.6M162.70 434.00h1.6M170.74 434.00h1.6M178.78 434.00h1.6M186.82 434.00h1.6M194.86 434.00h1.6M202.90 434.00h1.6M210.94 434.00h1.6M218.98 434.00h1.6M227.02 434.00h1.6M235.06 434.00h1.6M243.10 434.00h1.6M251.14 434.00h1.6M259.18 434.00h1.6M267.22 434.00h1.6M275.26 434.00h1.6M283.30 434.00h1.6M291.34 434.00h1.6M299.38 434.00h1.6M307.42 434.00h1.6M315.46 434.00h1.6M323.50 434.00h1.6M331.54 434.00h1.6M339.58 434.00h1.6M347.62 434.00h1.6M355.66 434.00h1.6M363.70 434.00h1.6M371.74 434.00h1.6M379.78 434.00h1.6M387.82 434.00h1.6M395.86 434.00h1.6M403.90 434.00h1.6M411.94 434.00h1.6M419.98 434.00h1.6M428.02 434.00h1.6M436.06 434.00h1.6M444.10 434.00h1.6M452.14 434.00h1.6M460.18 434.00h1.6M468.22 434.00h1.6M476.26 434.00h1.6M484.30 434.00h1.6M492.34 434.00h1.6M500.38 434.00h1.6M508.42 434.00h1.6M516.46 434.00h1.6M524.50 434.00h1.6M532.54 434.00h1.6M540.58 434.00h1.6M548.62 434.00h1.6M556.66 434.00h1.6M564.70 434.00h1.6M572.74 434.00h1.6M580.78 434.00h1.6M588.82 434.00h1.6M596.86 434.00h1.6M604.90 434.00h1.6M612.94 434.00h1.6M620.98 434.00h1.6M629.02 434.00h1.6M637.06 434.00h1.6M645.10 434.00h1.6M653.14 434.00h1.6M661.18 434.00h1.6M669.22 434.00h1.6M677.26 434.00h1.6M685.30 434.00h1.6M693.34 434.00h1.6M701.38 434.00h1.6M709.42 434.00h1.6M717.46 434.00h1.6" stroke="#666" stroke-width="0.9" fill="none"/>
<line x1="79.50" y1="434.00" x2="82.50" y2="434.00" stroke="#333" stroke-width="1"/>
<path d="M90.34 436.30h1.6M98.38 436.30h1.6M106.42 436.30h1.6M114.46 436.30h1.6M122.50 436.30h1.6M130.54 436.30h1.6M138.58 436.30h1.6M146.62 436.30h1.6M154.66 436.30h1.6M162.70 436.30h1.6M170.74 436.30h1.6M178.78 436.30h1.6M186.82 436.30h1.6M194.86 436.30h1.6M202.90 436.30h1.6M210.94 436.30h1.6M218.98 436.30h1.6M227.02 436.30h1.6M235.06 436.30h1.6M243.10 436.30h1.6M251.14 436.30h1.6M259.18 436.30h1.6M267.22 436.30h1.6M275.26 436.30h1.6M283.30 436.30h1.6M291.34 436.30h1.6M299.38 436.30h1.6M307.42 436.30h1.6M315.46 436.30h1.6M323.50 436.30h1.6M331.54 436.30h1.6M339.58 436.30h1.6M347.62 436.30h1.6M355.66 436.30h1.6M363.70 436.30h1.6M371.74 436.30h1.6M379.78 436.30h1.6M387.82 436.30h1.6M395.86 436.30h1.6M403.90 436.30h1.6M411.94 436.30h1.6M419.98 436.30h1.6M428.02 436.30h1.6M436.06 436.30h1.6M444.10 436.30h1.6M452.14 436.30h1.6M460.18 436.30h1.6M468.22 436.30h1.6M476.26 436.30h1.6M484.30 436.30h1.6M492.34 436.30h1.6M500.38 436.30h1.6M508.42 436.30h1.6M516.46 436.30h1.6M524.50 436.30h1.6M532.54 436.30h1.6M540.58 436.30h1.6M548.62 436.30h1.6M556.66 436.30h1.6M564.70 436.30h1.6M572.74 436.30h1.6M580.78 436.30h1.6M588.82 436.30h1.6M596.86 436.30h1.6M604.90 436.30h1.6M612.94 436.30h1.6M620.98 436.30h1.6M629.02 436.30h1.6M637.06 436.30h1.6M645.10 436.30h1.6M653.14 436.30h1.6M661.18 436.30h1.6M669.22 436.30h1.6M677.26 436.30h1.6M685.30 436.30h1.6M693.34 436.30h1.6M701.38 436.30h1.6M709.42 436.30h1.6M717.46 436.30h1.6" stroke="#666" stroke-width="0.9" fill="none"/>
<line x1="79.50" y1="436.30" x2="82.50" y2="436.30" stroke="#333" stroke-width="1"/>
<path d="M90.34 438.50h1.6M98.38 438.50h1.6M106.42 438.50h1.6M114.46 438.50h1.6M122.50 438.50h1.6M130.54 438.50h1.6M138.58 438.50h1.6M146.62 438.50h1.6M154.66 438.50h1.6M162.70 438.50h1.6M170.74 438.50h1.6M178.78 438.50h1.6M186.82 438.50h1.6M194.86 438.50h1.6M202.90 438.50h1.6M210.94 438.50h1.6M218.98 438.50h1.6M227.02 438.50h1.6M235.06 438.50h1.6M243.10 438.50h1.6M251.14 438.50h1.6M259.18 438.50h1.6M267.22 438.50h1.6M275.26 438.50h1.6M283.30 438.50h1.6M291.34 438.50h1.6M299.38 438.50h1.6M307.42 438.50h1.6M315.46 438.50h1.6M323.50 438.50h1.6M331.54 438.50h1.6M339.58 438.50h1.6M347.62 438.50h1.6M355.66 438.50h1.6M363.70 438.50h1.6M371.74 438.50h1.6M379.78 438.50h1.6M387.82 438.50h1.6M395.86 438.50h1.6M403.90 438.50h1.6M411.94 438.50h1.6M419.98 438.50h1.6M428.02 438.50h1.6M436.06 438.50h1.6M444.10 438.50h1.6M452.14 438.50h1.6M460.18 438.50h1.6M468.22 438.50h1.6M476.26 438.50h1.6M484.30 438.50h1.6M492.34 438.50h1.6M500.38 438.50h1.6M508.42 438.50h1.6M516.46 438.50h1.6M524.50 438.50h1.6M532.54 438.50h1.6M540.58 438.50h1.6M548.62 438.50h1.6M556.66 438.50h1.6M564.70 438.50h1.6M572.74 438.50h1.6M580.78 438.50h1.6M588.82 438.50h1.6M596.86 438.50h1.6M604.90 438.50h1.6M612.94 438.50h1.6M620.98 438.50h1.6M629.02 438.50h1.6M637.06 438.50h1.6M645.10 438.50h1.6M653.14 438.50h1.6M661.18 438.50h1.6M669.22 438.50h1.6M677.26 438.50h1.6M685.30 438.50h1.6M693.34 438.50h1.6M701.38 438.50h1.6M709.42 438.50h1.6M717.46 438.50h1.6" stroke="#666" stroke-width="0.9" fill="none"/>
<line x1="79.50" y1="438.50" x2="82.50" y2="438.50" stroke="#333" stroke-width="1"/>
<path d="M90.34 440.80h1.6M98.38 440.80h1.6M106.42 440.80h1.6M114.46 440.80h1.6M122.50 440.80h1.6M130.54 440.80h1.6M138.58 440.80h1.6M146.62 440.80h1.6M154.66 440.80h1.6M162.70 440.80h1.6M170.74 440.80h1.6M178.78 440.80h1.6M186.82 440.80h1.6M194.86 440.80h1.6M202.90 440.80h1.6M210.94 440.80h1.6M218.98 440.80h1.6M227.02 440.80h1.6M235.06 440.80h1.6M243.10 440.80h1.6M251.14 440.80h1.6M259.18 440.80h1.6M267.22 440.80h1.6M275.26 440.80h1.6M283.30 440.80h1.6M291.34 440.80h1.6M299.38 440.80h1.6M307.42 440.80h1.6M315.46 440.80h1.6M323.50 440.80h1.6M331.54 440.80h1.6M339.58 440.80h1.6M347.62 440.80h1.6M355.66 440.80h1.6M363.70 440.80h1.6M371.74 440.80h1.6M379.78 440.80h1.6M387.82 440.80h1.6M395.86 440.80h1.6M403.90 440.80h1.6M411.94 440.80h1.6M419.98 440.80h1.6M428.02 440.80h1.6M436.06 440.80h1.6M444.10 440.80h1.6M452.14 440.80h1.6M460.18 440.80h1.6M468.22 440.80h1.6M476.26 440.80h1.6M484.30 440.80h1.6M492.34 440.80h1.6M500.38 440.80h1.6M508.42 440.80h1.6M516.46 440.80h1.6M524.50 440.80h1.6M532.54 440.80h1.6M540.58 440.80h1.6M548.62 440.80h1.6M556.66 440.80h1.6M564.70 440.80h1.6M572.74 440.80h1.6M580.78 440.80h1.6M588.82 440.80h1.6M596.86 440.80h1.6M604.90 440.80h1.6M612.94 440.80h1.6M620.98 440.80h1.6M629.02 440.80h1.6M637.06 440.80h1.6M645.10 440.80h1.6M653.14 440.80h1.6M661.18 440.80h1.6M669.22 440.80h1.6M677.26 440.80h1.6M685.30 440.80h1.6M693.34 440.80h1.6M701.38 440.80h1.6M709.42 440.80h1.6M717.46 440.80h1.6" stroke="#666" stroke-width="0.9" fill="none"/>
<line x1="79.50" y1="440.80" x2="82.50" y2="440.80" stroke="#333" stroke-width="1"/>
<line x1="82.50" y1="445.30" x2="720.00" y2="445.30" stroke="#333" stroke-width="1.1"/>
<path d="M90.34 447.40h1.6M98.38 447.40h1.6M106.42 447.40h1.6M114.46 447.40h1.6M122.50 447.40h1.6M130.54 447.40h1.6M138.58 447.40h1.6M146.62 447.40h1.6M154.66 447.40h1.6M162.70 447.40h1.6M170.74 447.40h1.6M178.78 447.40h1.6M186.82 447.40h1.6M194.86 447.40h1.6M202.90 447.40h1.6M210.94 447.40h1.6M218.98 447.40h1.6M227.02 447.40h1.6M235.06 447.40h1.6M243.10 447.40h1.6M251.14 447.40h1.6M259.18 447.40h1.6M267.22 447.40h1.6M275.26 447.40h1.6M283.30 447.40h1.6M291.34 447.40h1.6M299.38 447.40h1.6M307.42 447.40h1.6M315.46 447.40h1.6M323.50 447.40h1.6M331.54 447.40h1.6M339.58 447.40h1.6M347.62 447.40h1.6M355.66 447.40h1.6M363.70 447.40h1.6M371.74 447.40h1.6M379.78 447.40h1.6M387.82 447.40h1.6M395.86 447.40h1.6M403.90 447.40h1.6M411.94 447.40h1.6M419.98 447.40h1.6M428.02 447.40h1.6M436.06 447.40h1.6M444.10 447.40h1.6M452.14 447.40h1.6M460.18 447.40h1.6M468.22 447.40h1.6M476.26 447.40h1.6M484.30 447.40h1.6M492.34 447.40h1.6M500.38 447.40h1.6M508.42 447.40h1.6M516.46 447.40h1.6M524.50 447.40h1.6M532.54 447.40h1.6M540.58 447.40h1.6M548.62 447.40h1.6M556.66 447.40h1.6M564.70 447.40h1.6M572.74 447.40h1.6M580.78 447.40h1.6M588.82 447.40h1.6M596.86 447.40h1.6M604.90 447.40h1.6M612.94 447.40h1.6M620.98 447.40h1.6M629.02 447.40h1.6M637.06 447.40h1.6M645.10 447.40h1.6M653.14 447.40h1.6M661.18 447.40h1.6M669.22 447.40h1.6M677.26 447.40h1.6M685.30 447.40h1.6M693.34 447.40h1.6M701.38 447.40h1.6M709.42 447.40h1.6M717.46 447.40h1.6" stroke="#777" stroke-width="1.0" fill="none"/>
<path d="M90.34 454.50h1.6M98.38 454.50h1.6M106.42 454.50h1.6M114.46 454.50h1.6M122.50 454.50h1.6M130.54 454.50h1.6M138.58 454.50h1.6M146.62 454.50h1.6M154.66 454.50h1.6M162.70 454.50h1.6M170.74 454.50h1.6M178.78 454.50h1.6M186.82 454.50h1.6M194.86 454.50h1.6M202.90 454.50h1.6M210.94 454.50h1.6M218.98 454.50h1.6M227.02 454.50h1.6M235.06 454.50h1.6M243.10 454.50h1.6M251.14 454.50h1.6M259.18 454.50h1.6M267.22 454.50h1.6M275.26 454.50h1.6M283.30 454.50h1.6M291.34 454.50h1.6M299.38 454.50h1.6M307.42 454.50h1.6M315.46 454.50h1.6M323.50 454.50h1.6M331.54 454.50h1.6M339.58 454.50h1.6M347.62 454.50h1.6M355.66 454.50h1.6M363.70 454.50h1.6M371.74 454.50h1.6M379.78 454.50h1.6M387.82 454.50h1.6M395.86 454.50h1.6M403.90 454.50h1.6M411.94 454.50h1.6M419.98 454.50h1.6M428.02 454.50h1.6M436.06 454.50h1.6M444.10 454.50h1.6M452.14 454.50h1.6M460.18 454.50h1.6M468.22 454.50h1.6M476.26 454.50h1.6M484.30 454.50h1.6M492.34 454.50h1.6M500.38 454.50h1.6M508.42 454.50h1.6M516.46 454.50h1.6M524.50 454.50h1.6M532.54 454.50h1.6M540.58 454.50h1.6M548.62 454.50h1.6M556.66 454.50h1.6M564.70 454.50h1.6M572.74 454.50h1.6M580.78 454.50h1.6M588.82 454.50h1.6M596.86 454.50h1.6M604.90 454.50h1.6M612.94 454.50h1.6M620.98 454.50h1.6M629.02 454.50h1.6M637.06 454.50h1.6M645.10 454.50h1.6M653.14 454.50h1.6M661.18 454.50h1.6M669.22 454.50h1.6M677.26 454.50h1.6M685.30 454.50h1.6M693.34 454.50h1.6M701.38 454.50h1.6M709.42 454.50h1.6M717.46 454.50h1.6" stroke="#777" stroke-width="1.0" fill="none"/>
<path d="M90.34 461.20h1.6M98.38 461.20h1.6M106.42 461.20h1.6M114.46 461.20h1.6M122.50 461.20h1.6M130.54 461.20h1.6M138.58 461.20h1.6M146.62 461.20h1.6M154.66 461.20h1.6M162.70 461.20h1.6M170.74 461.20h1.6M178.78 461.20h1.6M186.82 461.20h1.6M194.86 461.20h1.6M202.90 461.20h1.6M210.94 461.20h1.6M218.98 461.20h1.6M227.02 461.20h1.6M235.06 461.20h1.6M243.10 461.20h1.6M251.14 461.20h1.6M259.18 461.20h1.6M267.22 461.20h1.6M275.26 461.20h1.6M283.30 461.20h1.6M291.34 461.20h1.6M299.38 461.20h1.6M307.42 461.20h1.6M315.46 461.20h1.6M323.50 461.20h1.6M331.54 461.20h1.6M339.58 461.20h1.6M347.62 461.20h1.6M355.66 461.20h1.6M363.70 461.20h1.6M371.74 461.20h1.6M379.78 461.20h1.6M387.82 461.20h1.6M395.86 461.20h1.6M403.90 461.20h1.6M411.94 461.20h1.6M419.98 461.20h1.6M428.02 461.20h1.6M436.06 461.20h1.6M444.10 461.20h1.6M452.14 461.20h1.6M460.18 461.20h1.6M468.22 461.20h1.6M476.26 461.20h1.6M484.30 461.20h1.6M492.34 461.20h1.6M500.38 461.20h1.6M508.42 461.20h1.6M516.46 461.20h1.6M524.50 461.20h1.6M532.54 461.20h1.6M540.58 461.20h1.6M548.62 461.20h1.6M556.66 461.20h1.6M564.70 461.20h1.6M572.74 461.20h1.6M580.78 461.20h1.6M588.82 461.20h1.6M596.86 461.20h1.6M604.90 461.20h1.6M612.94 461.20h1.6M620.98 461.20h1.6M629.02 461.20h1.6M637.06 461.20h1.6M645.10 461.20h1.6M653.14 461.20h1.6M661.18 461.20h1.6M669.22 461.20h1.6M677.26 461.20h1.6M685.30 461.20h1.6M693.34 461.20h1.6M701.38 461.20h1.6M709.42 461.20h1.6M717.46 461.20h1.6" stroke="#777" stroke-width="1.0" fill="none"/>
<path d="M90.34 468.00h1.6M98.38 468.00h1.6M106.42 468.00h1.6M114.46 468.00h1.6M122.50 468.00h1.6M130.54 468.00h1.6M138.58 468.00h1.6M146.62 468.00h1.6M154.66 468.00h1.6M162.70 468.00h1.6M170.74 468.00h1.6M178.78 468.00h1.6M186.82 468.00h1.6M194.86 468.00h1.6M202.90 468.00h1.6M210.94 468.00h1.6M218.98 468.00h1.6M227.02 468.00h1.6M235.06 468.00h1.6M243.10 468.00h1.6M251.14 468.00h1.6M259.18 468.00h1.6M267.22 468.00h1.6M275.26 468.00h1.6M283.30 468.00h1.6M291.34 468.00h1.6M299.38 468.00h1.6M307.42 468.00h1.6M315.46 468.00h1.6M323.50 468.00h1.6M331.54 468.00h1.6M339.58 468.00h1.6M347.62 468.00h1.6M355.66 468.00h1.6M363.70 468.00h1.6M371.74 468.00h1.6M379.78 468.00h1.6M387.82 468.00h1.6M395.86 468.00h1.6M403.90 468.00h1.6M411.94 468.00h1.6M419.98 468.00h1.6M428.02 468.00h1.6M436.06 468.00h1.6M444.10 468.00h1.6M452.14 468.00h1.6M460.18 468.00h1.6M468.22 468.00h1.6M476.26 468.00h1.6M484.30 468.00h1.6M492.34 468.00h1.6M500.38 468.00h1.6M508.42 468.00h1.6M516.46 468.00h1.6M524.50 468.00h1.6M532.54 468.00h1.6M540.58 468.00h1.6M548.62 468.00h1.6M556.66 468.00h1.6M564.70 468.00h1.6M572.74 468.00h1.6M580.78 468.00h1.6M588.82 468.00h1.6M596.86 468.00h1.6M604.90 468.00h1.6M612.94 468.00h1.6M620.98 468.00h1.6M629.02 468.00h1.6M637.06 468.00h1.6M645.10 468.00h1.6M653.14 468.00h1.6M661.18 468.00h1.6M669.22 468.00h1.6M677.26 468.00h1.6M685.30 468.00h1.6M693.34 468.00h1.6M701.38 468.00h1.6M709.42 468.00h1.6M717.46 468.00h1.6" stroke="#777" stroke-width="1.0" fill="none"/>
<line x1="79.50" y1="447.40" x2="82.50" y2="447.40" stroke="#333" stroke-width="1"/>
<line x1="79.50" y1="454.50" x2="82.50" y2="454.50" stroke="#333" stroke-width="1"/>
<line x1="79.50" y1="461.20" x2="82.50" y2="461.20" stroke="#333" stroke-width="1"/>
<line x1="79.50" y1="468.00" x2="82.50" y2="468.00" stroke="#333" stroke-width="1"/>
<line x1="79.50" y1="475.00" x2="82.50" y2="475.00" stroke="#333" stroke-width="1"/>
<line x1="79.50" y1="481.40" x2="82.50" y2="481.40" stroke="#333" stroke-width="1"/>
<path d="M91.14 480.8V482.8M99.18 480.8V482.8M107.22 480.8V482.8M115.26 480.8V482.8M123.30 480.8V482.8M131.34 480.8V482.8M139.38 480.8V482.8M147.42 480.8V482.8M155.46 480.8V482.8M163.50 480.8V482.8M171.54 480.8V482.8M179.58 480.8V482.8M187.62 480.8V482.8M195.66 480.8V482.8M203.70 480.8V482.8M211.74 480.8V482.8M219.78 480.8V482.8M227.82 480.8V482.8M235.86 480.8V482.8M243.90 480.8V482.8M251.94 480.8V482.8M259.98 480.8V482.8M268.02 480.8V482.8M276.06 480.8V482.8M284.10 480.8V482.8M292.14 480.8V482.8M300.18 480.8V482.8M308.22 480.8V482.8M316.26 480.8V482.8M324.30 480.8V482.8M332.34 480.8V482.8M340.38 480.8V482.8M348.42 480.8V482.8M356.46 480.8V482.8M364.50 480.8V482.8M372.54 480.8V482.8M380.58 480.8V482.8M388.62 480.8V482.8M396.66 480.8V482.8M404.70 480.8V482.8M412.74 480.8V482.8M420.78 480.8V482.8M428.82 480.8V482.8M436.86 480.8V482.8M444.90 480.8V482.8M452.94 480.8V482.8M460.98 480.8V482.8M469.02 480.8V482.8M477.06 480.8V482.8M485.10 480.8V482.8M493.14 480.8V482.8M501.18 480.8V482.8M509.22 480.8V482.8M517.26 480.8V482.8M525.30 480.8V482.8M533.34 480.8V482.8M541.38 480.8V482.8M549.42 480.8V482.8M557.46 480.8V482.8M565.50 480.8V482.8M573.54 480.8V482.8M581.58 480.8V482.8M589.62 480.8V482.8M597.66 480.8V482.8M605.70 480.8V482.8M613.74 480.8V482.8M621.78 480.8V482.8M629.82 480.8V482.8M637.86 480.8V482.8M645.90 480.8V482.8M653.94 480.8V482.8M661.98 480.8V482.8M670.02 480.8V482.8M678.06 480.8V482.8M686.10 480.8V482.8M694.14 480.8V482.8M702.18 480.8V482.8M710.22 480.8V482.8M718.26 480.8V482.8" stroke="#666" stroke-width="0.8" fill="none"/>
<line x1="82.50" y1="483.10" x2="720.00" y2="483.10" stroke="#333" stroke-width="1.2"/>
<path d="M84 475V481.5H87" fill="none" stroke="#222" stroke-width="0.8"/>
<line x1="82.50" y1="48.00" x2="82.50" y2="483.50" stroke="#555" stroke-width="1.1"/>
<line x1="172.60" y1="48.00" x2="172.60" y2="483.30" stroke="#000" stroke-width="1.4"/>
<text x="83.00" y="488.60" font-family="Liberation Sans" font-size="3.7" fill="#222" text-anchor="middle" font-weight="bold">12:29 PM</text>
<text x="169.00" y="488.60" font-family="Liberation Sans" font-size="3.7" fill="#222" text-anchor="middle" font-weight="bold">1:00 AM</text>
<text x="255.60" y="488.60" font-family="Liberation Sans" font-size="3.7" fill="#222" text-anchor="middle" font-weight="bold">2:00 AM</text>
<text x="344.00" y="488.60" font-family="Liberation Sans" font-size="3.7" fill="#222" text-anchor="middle" font-weight="bold">3:00 AM</text>
<text x="429.50" y="488.60" font-family="Liberation Sans" font-size="3.7" fill="#222" text-anchor="middle" font-weight="bold">4:00 AM</text>
<text x="517.00" y="488.60" font-family="Liberation Sans" font-size="3.7" fill="#222" text-anchor="middle" font-weight="bold">5:00 AM</text>
<text x="604.00" y="488.60" font-family="Liberation Sans" font-size="3.7" fill="#222" text-anchor="middle" font-weight="bold">6:00 AM</text>
<text x="691.00" y="488.60" font-family="Liberation Sans" font-size="3.7" fill="#222" text-anchor="middle" font-weight="bold">7:00 AM</text>
<text x="45.00" y="72.09" font-family="Liberation Sans" font-size="5.8" fill="#000" stroke="#000" stroke-width="0.2" font-weight="bold" textLength="18.60" lengthAdjust="spacingAndGlyphs">Staging</text>
<text x="78.00" y="52.40" font-family="Liberation Sans" font-size="3.9" fill="#333" text-anchor="end">WAKE</text>
<text x="78.00" y="62.20" font-family="Liberation Sans" font-size="3.9" fill="#333" text-anchor="end">REM</text>
<text x="78.00" y="71.70" font-family="Liberation Sans" font-size="3.9" fill="#333" text-anchor="end">Stg 1</text>
<text x="78.00" y="81.10" font-family="Liberation Sans" font-size="3.9" fill="#333" text-anchor="end">Stg 2</text>
<text x="78.00" y="90.40" font-family="Liberation Sans" font-size="3.9" fill="#333" text-anchor="end">Stg 3</text>
<text x="41.20" y="116.29" font-family="Liberation Sans" font-size="5.8" fill="#000" stroke="#000" stroke-width="0.2" font-weight="bold" textLength="36.80" lengthAdjust="spacingAndGlyphs">Arousal Events</text>
<text x="52.80" y="160.09" font-family="Liberation Sans" font-size="5.8" fill="#000" stroke="#000" stroke-width="0.2" font-weight="bold" textLength="25.40" lengthAdjust="spacingAndGlyphs">LM Events</text>
<text x="1.10" y="204.49" font-family="Liberation Sans" font-size="5.8" fill="#000" stroke="#000" stroke-width="0.04" font-weight="normal" textLength="45.60" lengthAdjust="spacingAndGlyphs">Respiratory Events</text>
<text x="65.80" y="187.60" font-family="Liberation Sans" font-size="3.9" fill="#333" text-anchor="middle">Hypopnea</text>
<text x="65.80" y="195.80" font-family="Liberation Sans" font-size="3.9" fill="#333" text-anchor="middle">Unclassified Apnea</text>
<text x="65.80" y="203.80" font-family="Liberation Sans" font-size="3.9" fill="#333" text-anchor="middle">Obstructive Apnea</text>
<text x="65.80" y="211.90" font-family="Liberation Sans" font-size="3.9" fill="#333" text-anchor="middle">Central Apnea</text>
<text x="65.80" y="220.30" font-family="Liberation Sans" font-size="3.9" fill="#333" text-anchor="middle">Mixed Apnea</text>
<text x="57.80" y="249.09" font-family="Liberation Sans" font-size="5.8" fill="#000" stroke="#000" stroke-width="0.2" font-weight="bold" textLength="12.20" lengthAdjust="spacingAndGlyphs">SpO2</text>
<text x="78.50" y="229.50" font-family="Liberation Sans" font-size="3.6" fill="#333" text-anchor="end">100</text>
<text x="78.50" y="236.60" font-family="Liberation Sans" font-size="3.6" fill="#333" text-anchor="end">90</text>
<text x="78.50" y="244.30" font-family="Liberation Sans" font-size="3.6" fill="#333" text-anchor="end">80</text>
<text x="78.50" y="251.70" font-family="Liberation Sans" font-size="3.6" fill="#333" text-anchor="end">70</text>
<text x="78.50" y="259.30" font-family="Liberation Sans" font-size="3.6" fill="#333" text-anchor="end">60</text>
<text x="78.50" y="266.60" font-family="Liberation Sans" font-size="3.6" fill="#333" text-anchor="end">50</text>
<text x="18.00" y="293.22" font-family="Liberation Sans" font-size="5.6" fill="#000" stroke="#000" stroke-width="0.04" font-weight="normal" textLength="51.40" lengthAdjust="spacingAndGlyphs">EKG Mean Rate (bpm)</text>
<text x="78.50" y="271.50" font-family="Liberation Sans" font-size="3.6" fill="#333" text-anchor="end">100</text>
<text x="78.50" y="281.80" font-family="Liberation Sans" font-size="3.6" fill="#333" text-anchor="end">80</text>
<text x="78.50" y="292.30" font-family="Liberation Sans" font-size="3.6" fill="#333" text-anchor="end">60</text>
<text x="78.50" y="302.60" font-family="Liberation Sans" font-size="3.6" fill="#333" text-anchor="end">40</text>
<text x="78.50" y="312.30" font-family="Liberation Sans" font-size="3.6" fill="#333" text-anchor="end">20</text>
<text x="43.50" y="337.58" font-family="Liberation Sans" font-size="6.6" fill="#000" stroke="#000" stroke-width="0.2" font-weight="bold" textLength="20.50" lengthAdjust="spacingAndGlyphs">Position</text>
<text x="73.00" y="317.90" font-family="Liberation Sans" font-size="3.9" fill="#333" text-anchor="middle">Left</text>
<text x="73.00" y="327.10" font-family="Liberation Sans" font-size="3.9" fill="#333" text-anchor="middle">Right</text>
<text x="73.00" y="336.80" font-family="Liberation Sans" font-size="3.9" fill="#333" text-anchor="middle">Supine</text>
<text x="73.00" y="345.80" font-family="Liberation Sans" font-size="3.9" fill="#333" text-anchor="middle">Prone</text>
<text x="73.00" y="355.60" font-family="Liberation Sans" font-size="3.9" fill="#333" text-anchor="middle">Upright</text>
<text x="33.90" y="384.22" font-family="Liberation Sans" font-size="5.6" fill="#000" stroke="#000" stroke-width="0.04" font-weight="normal" textLength="38.50" lengthAdjust="spacingAndGlyphs">CPAP &amp; BiLevel</text>
<text x="78.50" y="368.60" font-family="Liberation Sans" font-size="3.6" fill="#333" text-anchor="end">20</text>
<text x="78.50" y="378.20" font-family="Liberation Sans" font-size="3.6" fill="#333" text-anchor="end">15</text>
<text x="78.50" y="388.60" font-family="Liberation Sans" font-size="3.6" fill="#333" text-anchor="end">10</text>
<text x="78.50" y="396.30" font-family="Liberation Sans" font-size="3.6" fill="#333" text-anchor="end">5</text>
<text x="27.30" y="426.12" font-family="Liberation Sans" font-size="5.6" fill="#000" stroke="#000" stroke-width="0.04" font-weight="normal" textLength="41.60" lengthAdjust="spacingAndGlyphs">O2 Titration (lpm)</text>
<text x="78.50" y="402.78" font-family="Liberation Sans" font-size="3.0" fill="#333" text-anchor="end">14</text>
<text x="78.50" y="411.68" font-family="Liberation Sans" font-size="3.0" fill="#333" text-anchor="end">12</text>
<text x="78.50" y="421.68" font-family="Liberation Sans" font-size="3.0" fill="#333" text-anchor="end">10</text>
<text x="78.50" y="426.08" font-family="Liberation Sans" font-size="3.0" fill="#333" text-anchor="end">8</text>
<text x="78.50" y="430.58" font-family="Liberation Sans" font-size="3.0" fill="#333" text-anchor="end">6</text>
<text x="78.50" y="435.08" font-family="Liberation Sans" font-size="3.0" fill="#333" text-anchor="end">4</text>
<text x="78.50" y="439.58" font-family="Liberation Sans" font-size="3.0" fill="#333" text-anchor="end">2</text>
<text x="14.20" y="467.12" font-family="Liberation Sans" font-size="5.6" fill="#000" stroke="#000" stroke-width="0.04" font-weight="normal" textLength="54.70" lengthAdjust="spacingAndGlyphs">End Tidal CO2 (mm Hg)</text>
<text x="78.50" y="448.90" font-family="Liberation Sans" font-size="3.6" fill="#333" text-anchor="end">60</text>
<text x="78.50" y="455.30" font-family="Liberation Sans" font-size="3.6" fill="#333" text-anchor="end">50</text>
<text x="78.50" y="462.30" font-family="Liberation Sans" font-size="3.6" fill="#333" text-anchor="end">40</text>
<text x="78.50" y="469.50" font-family="Liberation Sans" font-size="3.6" fill="#333" text-anchor="end">30</text>
<text x="78.50" y="476.30" font-family="Liberation Sans" font-size="3.6" fill="#333" text-anchor="end">20</text>
<text x="78.50" y="482.70" font-family="Liberation Sans" font-size="3.6" fill="#333" text-anchor="end">10</text>
<rect x="0.00" y="0.00" width="720.00" height="48.00" fill="#000099"/>
<rect x="0.00" y="0.00" width="111.00" height="48.00" fill="#2d4b7c"/>
<rect x="109.20" y="0.00" width="1.80" height="48.00" fill="#3a50a0"/>
<clipPath id="hc"><rect x="0" y="0" width="111" height="48"/></clipPath>
<g clip-path="url(#hc)"><text x="4.3" y="52.2" font-family="Liberation Serif" font-size="20.5" fill="#ffffff" stroke="#ffffff" stroke-width="0.6" textLength="101" lengthAdjust="spacingAndGlyphs">U<tspan font-size="16">PSTATE</tspan></text></g>
<rect x="0.00" y="490.00" width="720.00" height="50.00" fill="#000099"/>
<rect x="0.00" y="490.00" width="110.60" height="50.00" fill="#12a8e0"/>
<rect x="0.00" y="490.00" width="1.00" height="50.00" fill="#c8c8e0"/>
<rect x="1.00" y="490.00" width="2.75" height="50.00" fill="#1e2a55"/>
<rect x="3.75" y="490.00" width="1.25" height="50.00" fill="#b0b0d0"/>
<rect x="5.00" y="490.00" width="34.50" height="14.75" fill="#2d4a80"/>
<rect x="5.00" y="506.00" width="34.50" height="34.00" fill="#8a3a90"/>
<rect x="5.00" y="504.75" width="34.50" height="1.25" fill="#b0a0d0"/>
<rect x="35.00" y="505.00" width="28.75" height="0.80" fill="#58c8f0"/>
<rect x="80.60" y="490.00" width="25.65" height="4.75" fill="#1a70b8"/>
<rect x="64.40" y="495.00" width="41.80" height="0.80" fill="#58c8f0"/>
<rect x="107.25" y="490.00" width="1.50" height="50.00" fill="#98b0cc"/>
<rect x="108.75" y="490.00" width="1.90" height="5.00" fill="#1a2a70"/>
<rect x="108.30" y="495.80" width="151.00" height="44.20" fill="#1a72b8"/>
<rect x="108.50" y="495.80" width="1.20" height="44.20" fill="#70a8d8"/>
<rect x="259.30" y="495.20" width="258.80" height="45.00" fill="#ffffff"/>
<rect x="108.30" y="538.30" width="410.00" height="1.70" fill="#c8c8c8"/>
<text x="115.8" y="519.6" font-family="Liberation Sans" font-size="9.6" fill="#ffffff" stroke="#ffffff" stroke-width="0.12" textLength="130.6" lengthAdjust="spacingAndGlyphs">Knowing changes everything.</text>
<text x="247.8" y="515" font-family="Liberation Sans" font-size="4" fill="#ffffff">™</text></svg></div></body></html>
